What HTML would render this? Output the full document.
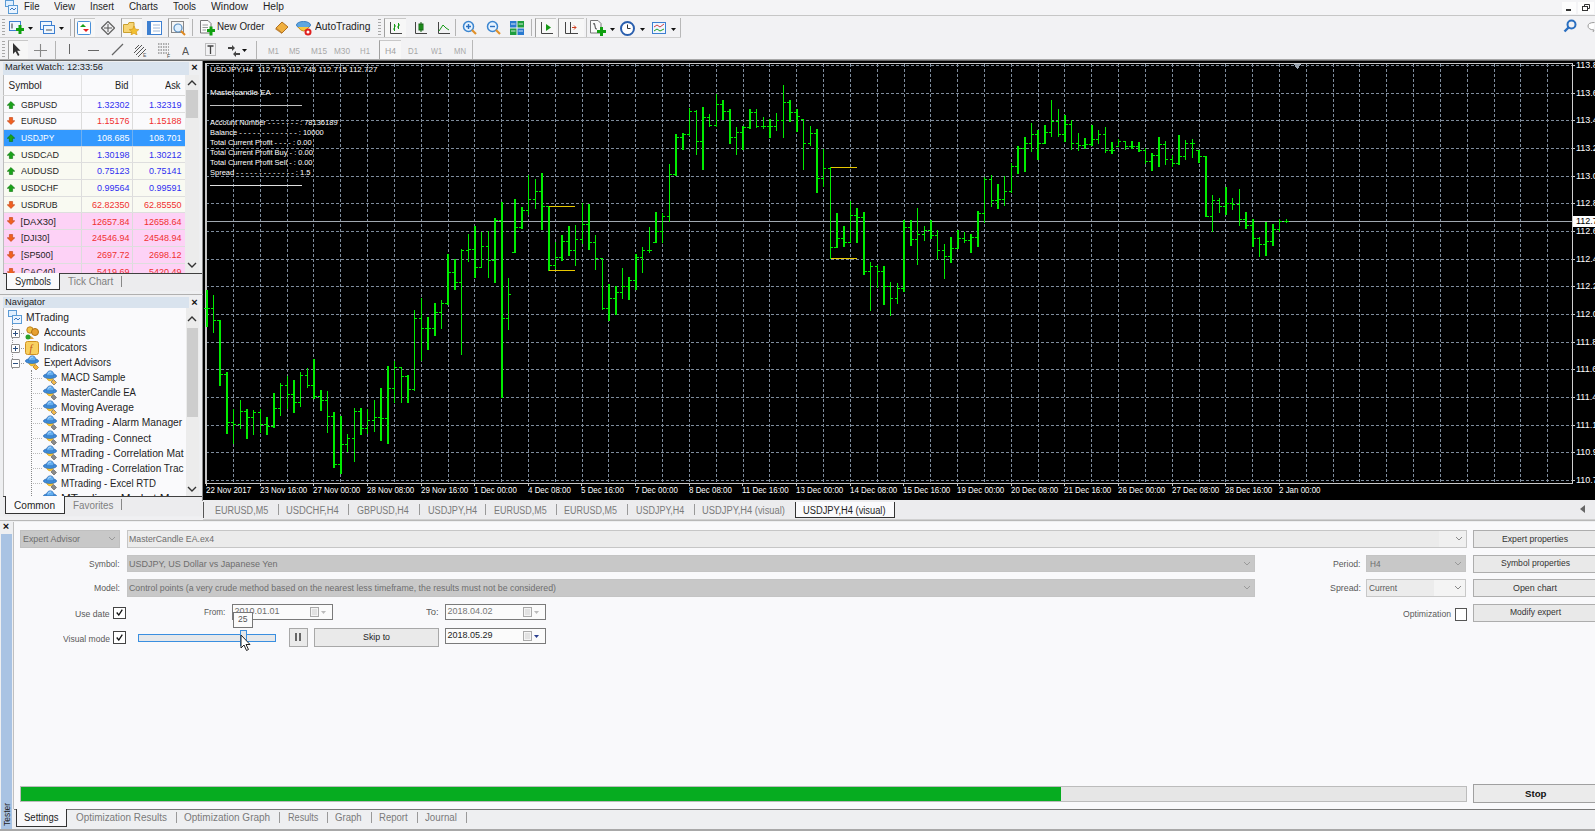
<!DOCTYPE html><html><head><meta charset="utf-8"><style>
*{margin:0;padding:0;box-sizing:border-box}
html,body{width:1595px;height:831px;overflow:hidden;background:#f0f0f2;font-family:"Liberation Sans",sans-serif}
.t{position:absolute;white-space:pre;line-height:1}
.b{position:absolute}
svg{position:absolute}
</style></head><body><div class="b" style="left:0px;top:0px;width:1595px;height:15px;background:#f4f4f6"></div><svg style="left:4px;top:0px;" width="14" height="14" viewBox="0 0 14 14"><rect x="1.5" y="0.5" width="8" height="6" fill="#dfefff" stroke="#5b9bd5"/><rect x="4.5" y="5.5" width="9" height="8" fill="#eaf4ff" stroke="#5b9bd5"/><path d="M6 10l2-2 2 2 2-2" stroke="#3a78c0" fill="none"/></svg><div class="t" style="left:23.50px;top:1.84px;font-size:10px;color:#1e1e1e;transform:scaleX(0.9619);transform-origin:0 0;">File</div><div class="t" style="left:54.00px;top:1.84px;font-size:10px;color:#1e1e1e;transform:scaleX(0.9770);transform-origin:0 0;">View</div><div class="t" style="left:90.00px;top:1.84px;font-size:10px;color:#1e1e1e;transform:scaleX(0.9596);transform-origin:0 0;">Insert</div><div class="t" style="left:129.00px;top:1.84px;font-size:10px;color:#1e1e1e;transform:scaleX(0.9846);transform-origin:0 0;">Charts</div><div class="t" style="left:173.00px;top:1.84px;font-size:10px;color:#1e1e1e;transform:scaleX(0.9852);transform-origin:0 0;">Tools</div><div class="t" style="left:211.00px;top:1.84px;font-size:10px;color:#1e1e1e;transform:scaleX(1.0403);transform-origin:0 0;">Window</div><div class="t" style="left:263.00px;top:1.84px;font-size:10px;color:#1e1e1e;transform:scaleX(1.0210);transform-origin:0 0;">Help</div><div class="b" style="left:1562px;top:2px;width:14px;height:12px;background:#fdfdfd"></div><div class="b" style="left:1566px;top:9px;width:5px;height:1.5px;background:#333"></div><div class="b" style="left:1578px;top:2px;width:16px;height:12px;background:#fdfdfd"></div><svg style="left:1580px;top:3px;" width="12" height="10" viewBox="0 0 12 10"><rect x="2.5" y="3.5" width="5" height="4" fill="none" stroke="#333"/><path d="M4.5 3.5V1.5H9.5V5.5H7.5" fill="none" stroke="#333"/></svg><div class="b" style="left:0px;top:15px;width:1595px;height:1px;background:#c6c6c6"></div><div class="b" style="left:0px;top:16px;width:1595px;height:22px;background:#f2f2f4"></div><div class="b" style="left:0px;top:37px;width:681px;height:1px;background:#cfcfcf"></div><div class="b" style="left:2px;top:19px;width:3px;height:1px;background:#a8a8a8"></div><div class="b" style="left:2px;top:22px;width:3px;height:1px;background:#a8a8a8"></div><div class="b" style="left:2px;top:25px;width:3px;height:1px;background:#a8a8a8"></div><div class="b" style="left:2px;top:28px;width:3px;height:1px;background:#a8a8a8"></div><div class="b" style="left:2px;top:31px;width:3px;height:1px;background:#a8a8a8"></div><div class="b" style="left:2px;top:34px;width:3px;height:1px;background:#a8a8a8"></div><svg style="left:9px;top:21px;" width="16" height="14" viewBox="0 0 16 14"><rect x="0.5" y="0.5" width="11" height="9" fill="#eef6ff" stroke="#3d7fd0"/><path d="M3 2.5V7.5" stroke="#333"/><rect x="7" y="7" width="8" height="3" fill="#10a010"/><rect x="9.5" y="4" width="3" height="9" fill="#10a010"/></svg><svg style="left:28px;top:27px;" width="5" height="3" viewBox="0 0 5 3"><path d="M0 0H5L2.5 3Z" fill="#111"/></svg><svg style="left:40px;top:21px;" width="16" height="14" viewBox="0 0 16 14"><rect x="0.5" y="0.5" width="11" height="8" fill="#eef6ff" stroke="#3d7fd0"/><rect x="3.5" y="4.5" width="11" height="8" fill="#eef6ff" stroke="#3d7fd0"/><path d="M6 9H12" stroke="#555"/></svg><svg style="left:59px;top:27px;" width="5" height="3" viewBox="0 0 5 3"><path d="M0 0H5L2.5 3Z" fill="#111"/></svg><div class="b" style="left:70px;top:19px;width:1px;height:17px;background:#b4b4b4"></div><div class="b" style="left:74px;top:18px;width:21px;height:19px;border-left:1px solid #a0a0a0;border-top:1px solid #c8c8c8;background:#f7f7f7"></div><svg style="left:77px;top:21px;" width="14" height="14" viewBox="0 0 14 14"><rect x="0.5" y="0.5" width="13" height="13" rx="1" fill="#fff" stroke="#4a90d9"/><path d="M3 6l3-3 3 3z" fill="#19a019"/><path d="M6 8l3 3 3-3z" fill="#e52020"/></svg><svg style="left:101px;top:21px;" width="14" height="14" viewBox="0 0 14 14"><path d="M7 0.5L13.5 7L7 13.5L0.5 7Z" fill="none" stroke="#666" stroke-width="1.3"/><path d="M7 3V11M3 7H11" stroke="#555"/></svg><div class="b" style="left:121px;top:18px;width:21px;height:19px;border-left:1px solid #a0a0a0;border-top:1px solid #c8c8c8;background:#f7f7f7"></div><svg style="left:123px;top:21px;" width="17" height="14" viewBox="0 0 17 14"><path d="M0.5 3.5H5l1-2h5v10H0.5z" fill="#f7d575" stroke="#c9a030"/><path d="M11 5l1.5 3.2 3.4.4-2.6 2.2.8 3.3-3.1-1.8-3 1.8.8-3.3-2.6-2.2 3.4-.4z" fill="#f2c030" stroke="#d09010" stroke-width=".6"/></svg><svg style="left:147px;top:21px;" width="15" height="14" viewBox="0 0 15 14"><rect x="0.5" y="0.5" width="14" height="13" fill="#fff" stroke="#3d7fd0"/><rect x="1" y="1" width="3" height="12" fill="#3d7fd0"/><path d="M6 4H13M6 7H13M6 10H13" stroke="#a0b8d8"/></svg><div class="b" style="left:168px;top:18px;width:21px;height:19px;border-left:1px solid #a0a0a0;border-top:1px solid #c8c8c8;background:#f7f7f7"></div><svg style="left:171px;top:21px;" width="16" height="15" viewBox="0 0 16 15"><rect x="0.5" y="0.5" width="12" height="11" fill="#f4f4f4" stroke="#888"/><circle cx="7" cy="7" r="4" fill="#dff0ff" stroke="#5a8fc0" stroke-width="1.2"/><path d="M10 10l4 4" stroke="#e08a20" stroke-width="2"/></svg><div class="b" style="left:192px;top:19px;width:1px;height:17px;background:#b4b4b4"></div><svg style="left:200px;top:20px;" width="15" height="16" viewBox="0 0 15 16"><path d="M0.5 0.5H8l3 3V13H0.5z" fill="#fbfbfb" stroke="#777"/><path d="M2.5 5H8M2.5 7.5H8M2.5 10H6" stroke="#999"/><rect x="7" y="9" width="8" height="3" fill="#10a010"/><rect x="9.5" y="6.5" width="3" height="9" fill="#10a010"/></svg><div class="t" style="left:216.50px;top:21.73px;font-size:10px;color:#1e1e1e;transform:scaleX(0.9825);transform-origin:0 0;">New Order</div><svg style="left:274px;top:21px;" width="15" height="13" viewBox="0 0 15 13"><path d="M2 7L8 1L14 6L8 12Z" fill="#f0b040" stroke="#b07020"/><path d="M2 7L8 12L8 13L1 8Z" fill="#c08030"/></svg><svg style="left:296px;top:20px;" width="16" height="16" viewBox="0 0 16 16"><ellipse cx="7.5" cy="5" rx="7" ry="3.5" fill="#5ea6e0" stroke="#3b7dc0"/><path d="M2 7Q7.5 15 13 7" fill="#f5c842" stroke="#c89020"/><circle cx="12" cy="12" r="3.5" fill="#e02020"/><circle cx="12" cy="12" r="1.5" fill="#fff"/></svg><div class="t" style="left:314.50px;top:21.73px;font-size:10px;color:#1e1e1e;transform:scaleX(1.0257);transform-origin:0 0;">AutoTrading</div><div class="b" style="left:378px;top:19px;width:3px;height:1px;background:#a8a8a8"></div><div class="b" style="left:378px;top:22px;width:3px;height:1px;background:#a8a8a8"></div><div class="b" style="left:378px;top:25px;width:3px;height:1px;background:#a8a8a8"></div><div class="b" style="left:378px;top:28px;width:3px;height:1px;background:#a8a8a8"></div><div class="b" style="left:378px;top:31px;width:3px;height:1px;background:#a8a8a8"></div><div class="b" style="left:378px;top:34px;width:3px;height:1px;background:#a8a8a8"></div><div class="b" style="left:384px;top:18px;width:22px;height:19px;border-left:1px solid #a0a0a0;border-top:1px solid #c8c8c8;background:#f7f7f7"></div><svg style="left:389px;top:21px;" width="14" height="14" viewBox="0 0 14 14"><path d="M1.5 1V12.5H13" fill="none" stroke="#444"/><path d="M5.5 3V10M4 8H5.5M5.5 5H7M9.5 2V8M8 6H9.5M9.5 4H11" stroke="#159a15"/></svg><svg style="left:414px;top:21px;" width="14" height="14" viewBox="0 0 14 14"><path d="M1.5 1V12.5H13" fill="none" stroke="#444"/><rect x="5" y="3" width="4" height="6" fill="#20b020" stroke="#156015"/><path d="M7 1V11" stroke="#156015"/></svg><svg style="left:437px;top:21px;" width="14" height="14" viewBox="0 0 14 14"><path d="M1.5 1V12.5H13" fill="none" stroke="#444"/><path d="M2 10L6 4L9 7L12 9" fill="none" stroke="#159a15"/></svg><div class="b" style="left:455px;top:19px;width:1px;height:17px;background:#b4b4b4"></div><svg style="left:462px;top:20px;" width="16" height="16" viewBox="0 0 16 16"><circle cx="6.5" cy="6.5" r="5" fill="#e6f3ff" stroke="#3c86d0" stroke-width="1.5"/><path d="M4 6.5H9M6.5 4V9" stroke="#2a70c0" stroke-width="1.4"/><path d="M10 10l4 4" stroke="#e0902a" stroke-width="2.2"/></svg><svg style="left:486px;top:20px;" width="16" height="16" viewBox="0 0 16 16"><circle cx="6.5" cy="6.5" r="5" fill="#e6f3ff" stroke="#3c86d0" stroke-width="1.5"/><path d="M4 6.5H9" stroke="#2a70c0" stroke-width="1.4"/><path d="M10 10l4 4" stroke="#e0902a" stroke-width="2.2"/></svg><svg style="left:510px;top:21px;" width="14" height="14" viewBox="0 0 14 14"><rect x="0" y="0" width="6.5" height="6.5" fill="#2a7ad0"/><rect x="7.5" y="0" width="6.5" height="6.5" fill="#1e9e3e"/><rect x="0" y="7.5" width="6.5" height="6.5" fill="#1e9e3e"/><rect x="7.5" y="7.5" width="6.5" height="6.5" fill="#2a7ad0"/><path d="M1 3H5.5M8.5 3H13M1 10H5.5M8.5 10H13" stroke="#fff" stroke-width=".8"/></svg><div class="b" style="left:531px;top:19px;width:1px;height:17px;background:#b4b4b4"></div><div class="b" style="left:535px;top:18px;width:21px;height:19px;border-left:1px solid #a0a0a0;border-top:1px solid #c8c8c8;background:#f7f7f7"></div><svg style="left:540px;top:21px;" width="14" height="14" viewBox="0 0 14 14"><path d="M1.5 1V12.5H13" fill="none" stroke="#444"/><path d="M6 3V10L11 6.5Z" fill="#159a15"/></svg><div class="b" style="left:558px;top:18px;width:26px;height:19px;border-left:1px solid #a0a0a0;border-top:1px solid #c8c8c8;background:#f7f7f7"></div><svg style="left:564px;top:21px;" width="16" height="14" viewBox="0 0 16 14"><path d="M1.5 1V12.5H14" fill="none" stroke="#444"/><path d="M6.5 1V12" stroke="#444"/><path d="M8 6.5H12M10 4.5L12 6.5L10 8.5" stroke="#d04020" fill="none"/></svg><div class="b" style="left:586px;top:18px;width:1px;height:19px;background:#c0c0c0"></div><svg style="left:590px;top:20px;" width="17" height="17" viewBox="0 0 17 17"><path d="M0.5 0.5H8l3 3V13H0.5z" fill="#fbfbfb" stroke="#777"/><path d="M3 4Q5 2 5 6T7 9" stroke="#444" fill="none"/><rect x="7" y="10" width="9" height="3" fill="#10a010"/><rect x="10" y="7" width="3" height="9" fill="#10a010"/></svg><svg style="left:610px;top:28px;" width="5" height="3" viewBox="0 0 5 3"><path d="M0 0H5L2.5 3Z" fill="#111"/></svg><svg style="left:620px;top:21px;" width="15" height="15" viewBox="0 0 15 15"><circle cx="7.5" cy="7.5" r="6.5" fill="#fff" stroke="#2a5fae" stroke-width="2"/><path d="M7.5 3.5V7.5H10.5" stroke="#333" fill="none"/></svg><svg style="left:640px;top:28px;" width="5" height="3" viewBox="0 0 5 3"><path d="M0 0H5L2.5 3Z" fill="#111"/></svg><svg style="left:652px;top:22px;" width="14" height="12" viewBox="0 0 14 12"><rect x="0.5" y="0.5" width="13" height="11" fill="#f0f6ff" stroke="#3d7fd0"/><path d="M2 5L5 3L8 5L12 2" stroke="#d04040" fill="none"/><path d="M2 9L5 7L8 9L12 7" stroke="#20a020" fill="none"/></svg><svg style="left:671px;top:28px;" width="5" height="3" viewBox="0 0 5 3"><path d="M0 0H5L2.5 3Z" fill="#111"/></svg><div class="b" style="left:680px;top:18px;width:1px;height:19px;background:#b8b8b8"></div><div class="b" style="left:0px;top:38px;width:681px;height:1px;background:#d8d8d8"></div><svg style="left:1563px;top:19px;" width="14" height="14" viewBox="0 0 14 14"><circle cx="8.5" cy="5.5" r="4" fill="none" stroke="#2a6fc0" stroke-width="2"/><path d="M6 8L1.5 12.5" stroke="#2a6fc0" stroke-width="2.4"/></svg><svg style="left:1587px;top:21px;" width="8" height="12" viewBox="0 0 8 12"><path d="M7.5 1.5Q1 1.5 1 5T7 9L6 11" fill="#fff" stroke="#999"/></svg><div class="b" style="left:0px;top:38px;width:1595px;height:22px;background:#f2f2f4"></div><div class="b" style="left:2px;top:41px;width:3px;height:1px;background:#a8a8a8"></div><div class="b" style="left:2px;top:44px;width:3px;height:1px;background:#a8a8a8"></div><div class="b" style="left:2px;top:47px;width:3px;height:1px;background:#a8a8a8"></div><div class="b" style="left:2px;top:50px;width:3px;height:1px;background:#a8a8a8"></div><div class="b" style="left:2px;top:53px;width:3px;height:1px;background:#a8a8a8"></div><div class="b" style="left:2px;top:56px;width:3px;height:1px;background:#a8a8a8"></div><div class="b" style="left:8px;top:40px;width:20px;height:20px;border-left:1px solid #a0a0a0;border-top:1px solid #c8c8c8;background:#f7f7f7"></div><svg style="left:12px;top:43px;" width="10" height="14" viewBox="0 0 10 14"><path d="M1 0V11L3.5 8.5L6 13L7.5 12L5.2 7.8H8.5Z" fill="#333"/></svg><svg style="left:33px;top:43px;" width="15" height="15" viewBox="0 0 15 15"><path d="M7.5 1V14M1 7.5H14" stroke="#888" stroke-width="1.1"/></svg><div class="b" style="left:55px;top:41px;width:1px;height:18px;background:#b4b4b4"></div><div class="b" style="left:69px;top:44px;width:1.3px;height:10px;background:#666"></div><div class="b" style="left:88px;top:50px;width:11px;height:1.3px;background:#666"></div><svg style="left:111px;top:43px;" width="13" height="13" viewBox="0 0 13 13"><path d="M1 12L12 1" stroke="#666" stroke-width="1.3"/></svg><svg style="left:133px;top:42px;" width="15" height="16" viewBox="0 0 15 16"><path d="M1 11L9 3M3 13L11 5M5 15L13 7M2 7L6 3" stroke="#555" stroke-width="1"/><text x="10" y="15" font-size="5" fill="#555" font-family="Liberation Sans">E</text></svg><svg style="left:157px;top:42px;" width="15" height="16" viewBox="0 0 15 16"><path d="M1 2H12M1 5H12M1 8H12M1 11H12" stroke="#666" stroke-dasharray="1.5 1"/><text x="10" y="15.5" font-size="5" fill="#444" font-family="Liberation Sans">F</text></svg><div class="t" style="left:182.00px;top:46.53px;font-size:10px;color:#555;transform:scaleX(1.0494);transform-origin:0 0;">A</div><svg style="left:205px;top:43px;" width="11" height="13" viewBox="0 0 11 13"><rect x="0.5" y="0.5" width="10" height="12" fill="none" stroke="#888" stroke-dasharray="1 1"/><path d="M2.5 3H8.5M5.5 3V11" stroke="#444" stroke-width="1.3"/></svg><svg style="left:227px;top:43px;" width="14" height="14" viewBox="0 0 14 14"><path d="M1 4L5 4L5 2L8 5L5 8L5 6L1 6Z" fill="#444"/><path d="M13 10L9 10L9 8L6 11L9 14L9 12L13 12Z" fill="#444"/></svg><svg style="left:242px;top:49px;" width="5" height="3" viewBox="0 0 5 3"><path d="M0 0H5L2.5 3Z" fill="#111"/></svg><div class="b" style="left:256px;top:41px;width:1px;height:18px;background:#b4b4b4"></div><div class="t" style="left:268.00px;top:46.80px;font-size:8.5px;color:#a8a8a8;transform:scaleX(0.9316);transform-origin:0 0;">M1</div><div class="t" style="left:289.00px;top:46.80px;font-size:8.5px;color:#a8a8a8;transform:scaleX(0.9316);transform-origin:0 0;">M5</div><div class="t" style="left:311.00px;top:46.80px;font-size:8.5px;color:#a8a8a8;transform:scaleX(0.9676);transform-origin:0 0;">M15</div><div class="t" style="left:334.00px;top:46.80px;font-size:8.5px;color:#a8a8a8;transform:scaleX(0.9676);transform-origin:0 0;">M30</div><div class="t" style="left:360.00px;top:46.80px;font-size:8.5px;color:#a8a8a8;transform:scaleX(0.9203);transform-origin:0 0;">H1</div><div class="t" style="left:385.00px;top:46.80px;font-size:8.5px;color:#a8a8a8;transform:scaleX(1.0124);transform-origin:0 0;">H4</div><div class="t" style="left:408.00px;top:46.80px;font-size:8.5px;color:#a8a8a8;transform:scaleX(0.9203);transform-origin:0 0;">D1</div><div class="t" style="left:431.00px;top:46.80px;font-size:8.5px;color:#a8a8a8;transform:scaleX(0.8627);transform-origin:0 0;">W1</div><div class="t" style="left:454.00px;top:46.80px;font-size:8.5px;color:#a8a8a8;transform:scaleX(0.9078);transform-origin:0 0;">MN</div><div class="b" style="left:379px;top:40px;width:22px;height:20px;border-left:1px solid #a0a0a0;border-top:1px solid #c8c8c8;background:#f7f7f7"></div><div class="t" style="left:385.00px;top:46.80px;font-size:8.5px;color:#a0a0a0;transform:scaleX(1.0124);transform-origin:0 0;">H4</div><div class="b" style="left:472px;top:40px;width:1px;height:20px;background:#b8b8b8"></div><div class="b" style="left:0px;top:59px;width:1595px;height:1px;background:#a8a8a8"></div><div class="b" style="left:0px;top:60px;width:1595px;height:1px;background:#6a6a6a"></div><div class="b" style="left:0px;top:61px;width:203px;height:234px;background:#eeeff1"></div><div class="b" style="left:202px;top:61px;width:1px;height:440px;background:#8a8a8a"></div><div class="b" style="left:3px;top:62px;width:186px;height:13px;background:#d9e3ee"></div><div class="t" style="left:5.00px;top:63.38px;font-size:9px;color:#1e1e1e;transform:scaleX(1.0293);transform-origin:0 0;">Market Watch: 12:33:56</div><div class="t" style="left:191.29px;top:62.19px;font-size:11px;color:#111;font-weight:bold;">×</div><div class="b" style="left:3px;top:75px;width:182px;height:198px;background:#fafafc;border-left:1px solid #bdbdbd"></div><div class="b" style="left:3px;top:94.5px;width:182px;height:1.5px;background:#d8d8d8"></div><div class="b" style="left:81px;top:75px;width:1px;height:198px;background:#e2e2e2"></div><div class="b" style="left:132px;top:75px;width:1px;height:198px;background:#e2e2e2"></div><div class="t" style="left:8.50px;top:80.53px;font-size:10px;color:#1e1e1e;">Symbol</div><div class="t" style="left:115.00px;top:80.53px;font-size:10px;color:#1e1e1e;transform:scaleX(0.9340);transform-origin:0 0;">Bid</div><div class="t" style="left:164.50px;top:80.53px;font-size:10px;color:#1e1e1e;transform:scaleX(0.9298);transform-origin:0 0;">Ask</div><div class="b" style="left:4px;top:96.0px;width:181px;height:16.7px;background:#fafafc"></div><div class="b" style="left:81px;top:96.0px;width:1px;height:16.7px;background:#dcdcdc"></div><div class="b" style="left:132px;top:96.0px;width:1px;height:16.7px;background:#dcdcdc"></div><svg style="left:7px;top:100.5px;" width="8" height="8" viewBox="0 0 8 8"><path d="M4 0.5L7.8 4.3H5.6V7.5H2.4V4.3H0.2Z" fill="#1aa31a" stroke="#0c700c" stroke-width=".6"/></svg><div class="t" style="left:20.60px;top:99.66px;font-size:9.5px;color:#1e1e1e;transform:scaleX(0.9048);transform-origin:0 0;">GBPUSD</div><div class="t" style="left:97.47px;top:99.66px;font-size:9.5px;color:#3030f0;transform:scaleX(0.9474);transform-origin:0 0;">1.32302</div><div class="t" style="left:148.67px;top:99.66px;font-size:9.5px;color:#3030f0;transform:scaleX(0.9474);transform-origin:0 0;">1.32319</div><div class="b" style="left:4px;top:112.7px;width:181px;height:16.7px;background:#fafafc"></div><div class="b" style="left:81px;top:112.7px;width:1px;height:16.7px;background:#dcdcdc"></div><div class="b" style="left:132px;top:112.7px;width:1px;height:16.7px;background:#dcdcdc"></div><div class="b" style="left:4px;top:112.2px;width:181px;height:1px;background:#dedede"></div><svg style="left:7px;top:117.2px;" width="8" height="8" viewBox="0 0 8 8"><path d="M4 7.5L7.8 3.7H5.6V0.5H2.4V3.7H0.2Z" fill="#f06020" stroke="#c04010" stroke-width=".6"/></svg><div class="t" style="left:20.60px;top:116.36px;font-size:9.5px;color:#1e1e1e;transform:scaleX(0.8899);transform-origin:0 0;">EURUSD</div><div class="t" style="left:97.47px;top:116.36px;font-size:9.5px;color:#f03030;transform:scaleX(0.9474);transform-origin:0 0;">1.15176</div><div class="t" style="left:148.67px;top:116.36px;font-size:9.5px;color:#f03030;transform:scaleX(0.9474);transform-origin:0 0;">1.15188</div><div class="b" style="left:4px;top:129.4px;width:181px;height:16.7px;background:#3399ff"></div><div class="b" style="left:81px;top:129.4px;width:1px;height:16.7px;background:#70b0f0"></div><div class="b" style="left:132px;top:129.4px;width:1px;height:16.7px;background:#70b0f0"></div><div class="b" style="left:4px;top:128.9px;width:181px;height:1px;background:#dedede"></div><svg style="left:7px;top:133.9px;" width="8" height="8" viewBox="0 0 8 8"><path d="M4 0.5L7.8 4.3H5.6V7.5H2.4V4.3H0.2Z" fill="#1aa31a" stroke="#0c700c" stroke-width=".6"/></svg><div class="t" style="left:20.60px;top:133.06px;font-size:9.5px;color:#fff;transform:scaleX(0.8911);transform-origin:0 0;">USDJPY</div><div class="t" style="left:97.47px;top:133.06px;font-size:9.5px;color:#fff;transform:scaleX(0.9474);transform-origin:0 0;">108.685</div><div class="t" style="left:148.67px;top:133.06px;font-size:9.5px;color:#fff;transform:scaleX(0.9474);transform-origin:0 0;">108.701</div><div class="b" style="left:4px;top:146.1px;width:181px;height:16.7px;background:#f9faf2"></div><div class="b" style="left:81px;top:146.1px;width:1px;height:16.7px;background:#dcdcdc"></div><div class="b" style="left:132px;top:146.1px;width:1px;height:16.7px;background:#dcdcdc"></div><div class="b" style="left:4px;top:145.6px;width:181px;height:1px;background:#dedede"></div><svg style="left:7px;top:150.6px;" width="8" height="8" viewBox="0 0 8 8"><path d="M4 0.5L7.8 4.3H5.6V7.5H2.4V4.3H0.2Z" fill="#1aa31a" stroke="#0c700c" stroke-width=".6"/></svg><div class="t" style="left:20.60px;top:149.76px;font-size:9.5px;color:#1e1e1e;transform:scaleX(0.9472);transform-origin:0 0;">USDCAD</div><div class="t" style="left:97.47px;top:149.76px;font-size:9.5px;color:#3030f0;transform:scaleX(0.9474);transform-origin:0 0;">1.30198</div><div class="t" style="left:148.67px;top:149.76px;font-size:9.5px;color:#3030f0;transform:scaleX(0.9474);transform-origin:0 0;">1.30212</div><div class="b" style="left:4px;top:162.8px;width:181px;height:16.7px;background:#f9faf2"></div><div class="b" style="left:81px;top:162.8px;width:1px;height:16.7px;background:#dcdcdc"></div><div class="b" style="left:132px;top:162.8px;width:1px;height:16.7px;background:#dcdcdc"></div><div class="b" style="left:4px;top:162.3px;width:181px;height:1px;background:#dedede"></div><svg style="left:7px;top:167.3px;" width="8" height="8" viewBox="0 0 8 8"><path d="M4 0.5L7.8 4.3H5.6V7.5H2.4V4.3H0.2Z" fill="#1aa31a" stroke="#0c700c" stroke-width=".6"/></svg><div class="t" style="left:20.60px;top:166.46px;font-size:9.5px;color:#1e1e1e;transform:scaleX(0.9472);transform-origin:0 0;">AUDUSD</div><div class="t" style="left:97.47px;top:166.46px;font-size:9.5px;color:#3030f0;transform:scaleX(0.9474);transform-origin:0 0;">0.75123</div><div class="t" style="left:148.67px;top:166.46px;font-size:9.5px;color:#3030f0;transform:scaleX(0.9474);transform-origin:0 0;">0.75141</div><div class="b" style="left:4px;top:179.5px;width:181px;height:16.7px;background:#f9faf2"></div><div class="b" style="left:81px;top:179.5px;width:1px;height:16.7px;background:#dcdcdc"></div><div class="b" style="left:132px;top:179.5px;width:1px;height:16.7px;background:#dcdcdc"></div><div class="b" style="left:4px;top:179.0px;width:181px;height:1px;background:#dedede"></div><svg style="left:7px;top:184.0px;" width="8" height="8" viewBox="0 0 8 8"><path d="M4 0.5L7.8 4.3H5.6V7.5H2.4V4.3H0.2Z" fill="#1aa31a" stroke="#0c700c" stroke-width=".6"/></svg><div class="t" style="left:20.60px;top:183.16px;font-size:9.5px;color:#1e1e1e;transform:scaleX(0.9398);transform-origin:0 0;">USDCHF</div><div class="t" style="left:97.47px;top:183.16px;font-size:9.5px;color:#3030f0;transform:scaleX(0.9474);transform-origin:0 0;">0.99564</div><div class="t" style="left:148.67px;top:183.16px;font-size:9.5px;color:#3030f0;transform:scaleX(0.9474);transform-origin:0 0;">0.99591</div><div class="b" style="left:4px;top:196.2px;width:181px;height:16.7px;background:#f9faf2"></div><div class="b" style="left:81px;top:196.2px;width:1px;height:16.7px;background:#dcdcdc"></div><div class="b" style="left:132px;top:196.2px;width:1px;height:16.7px;background:#dcdcdc"></div><div class="b" style="left:4px;top:195.7px;width:181px;height:1px;background:#dedede"></div><svg style="left:7px;top:200.7px;" width="8" height="8" viewBox="0 0 8 8"><path d="M4 7.5L7.8 3.7H5.6V0.5H2.4V3.7H0.2Z" fill="#f06020" stroke="#c04010" stroke-width=".6"/></svg><div class="t" style="left:20.60px;top:199.86px;font-size:9.5px;color:#1e1e1e;transform:scaleX(0.9123);transform-origin:0 0;">USDRUB</div><div class="t" style="left:92.46px;top:199.86px;font-size:9.5px;color:#f03030;transform:scaleX(0.9474);transform-origin:0 0;">62.82350</div><div class="t" style="left:143.66px;top:199.86px;font-size:9.5px;color:#f03030;transform:scaleX(0.9474);transform-origin:0 0;">62.85550</div><div class="b" style="left:4px;top:212.89999999999998px;width:181px;height:16.7px;background:#fdd2f6"></div><div class="b" style="left:81px;top:212.89999999999998px;width:1px;height:16.7px;background:#dcdcdc"></div><div class="b" style="left:132px;top:212.89999999999998px;width:1px;height:16.7px;background:#dcdcdc"></div><div class="b" style="left:4px;top:212.39999999999998px;width:181px;height:1px;background:#dedede"></div><svg style="left:7px;top:217.39999999999998px;" width="8" height="8" viewBox="0 0 8 8"><path d="M4 7.5L7.8 3.7H5.6V0.5H2.4V3.7H0.2Z" fill="#f06020" stroke="#c04010" stroke-width=".6"/></svg><div class="t" style="left:20.60px;top:216.56px;font-size:9.5px;color:#1e1e1e;">[DAX30]</div><div class="t" style="left:92.46px;top:216.56px;font-size:9.5px;color:#f03030;transform:scaleX(0.9474);transform-origin:0 0;">12657.84</div><div class="t" style="left:143.66px;top:216.56px;font-size:9.5px;color:#f03030;transform:scaleX(0.9474);transform-origin:0 0;">12658.64</div><div class="b" style="left:4px;top:229.6px;width:181px;height:16.7px;background:#fdd2f6"></div><div class="b" style="left:81px;top:229.6px;width:1px;height:16.7px;background:#dcdcdc"></div><div class="b" style="left:132px;top:229.6px;width:1px;height:16.7px;background:#dcdcdc"></div><div class="b" style="left:4px;top:229.1px;width:181px;height:1px;background:#dedede"></div><svg style="left:7px;top:234.1px;" width="8" height="8" viewBox="0 0 8 8"><path d="M4 7.5L7.8 3.7H5.6V0.5H2.4V3.7H0.2Z" fill="#f06020" stroke="#c04010" stroke-width=".6"/></svg><div class="t" style="left:20.60px;top:233.26px;font-size:9.5px;color:#1e1e1e;transform:scaleX(0.9437);transform-origin:0 0;">[DJI30]</div><div class="t" style="left:92.46px;top:233.26px;font-size:9.5px;color:#f03030;transform:scaleX(0.9474);transform-origin:0 0;">24546.94</div><div class="t" style="left:143.66px;top:233.26px;font-size:9.5px;color:#f03030;transform:scaleX(0.9474);transform-origin:0 0;">24548.94</div><div class="b" style="left:4px;top:246.29999999999998px;width:181px;height:16.7px;background:#fdd2f6"></div><div class="b" style="left:81px;top:246.29999999999998px;width:1px;height:16.7px;background:#dcdcdc"></div><div class="b" style="left:132px;top:246.29999999999998px;width:1px;height:16.7px;background:#dcdcdc"></div><div class="b" style="left:4px;top:245.79999999999998px;width:181px;height:1px;background:#dedede"></div><svg style="left:7px;top:250.79999999999998px;" width="8" height="8" viewBox="0 0 8 8"><path d="M4 7.5L7.8 3.7H5.6V0.5H2.4V3.7H0.2Z" fill="#f06020" stroke="#c04010" stroke-width=".6"/></svg><div class="t" style="left:20.60px;top:249.96px;font-size:9.5px;color:#1e1e1e;transform:scaleX(0.9467);transform-origin:0 0;">[SP500]</div><div class="t" style="left:97.47px;top:249.96px;font-size:9.5px;color:#f03030;transform:scaleX(0.9474);transform-origin:0 0;">2697.72</div><div class="t" style="left:148.67px;top:249.96px;font-size:9.5px;color:#f03030;transform:scaleX(0.9474);transform-origin:0 0;">2698.12</div><div class="b" style="left:4px;top:263.0px;width:181px;height:10.0px;background:#fdd2f6"></div><div class="b" style="left:81px;top:263.0px;width:1px;height:10.0px;background:#dcdcdc"></div><div class="b" style="left:132px;top:263.0px;width:1px;height:10.0px;background:#dcdcdc"></div><div class="b" style="left:4px;top:262.5px;width:181px;height:1px;background:#dedede"></div><svg style="left:7px;top:267.5px;" width="8" height="8" viewBox="0 0 8 8"><path d="M4 7.5L7.8 3.7H5.6V0.5H2.4V3.7H0.2Z" fill="#f06020" stroke="#c04010" stroke-width=".6"/></svg><div class="t" style="left:20.60px;top:266.66px;font-size:9.5px;color:#1e1e1e;transform:scaleX(0.9553);transform-origin:0 0;">[CAC40]</div><div class="t" style="left:97.47px;top:266.66px;font-size:9.5px;color:#f03030;transform:scaleX(0.9474);transform-origin:0 0;">5419.69</div><div class="t" style="left:148.67px;top:266.66px;font-size:9.5px;color:#f03030;transform:scaleX(0.9474);transform-origin:0 0;">5420.49</div><div class="b" style="left:185px;top:75px;width:14px;height:198px;background:#ececec"></div><svg style="left:187px;top:79px;" width="10" height="7" viewBox="0 0 10 7"><path d="M1 6L5 2L9 6" stroke="#333" stroke-width="1.4" fill="none"/></svg><div class="b" style="left:186px;top:90px;width:12px;height:28px;background:#cdcdcd"></div><svg style="left:187px;top:262px;" width="10" height="7" viewBox="0 0 10 7"><path d="M1 1L5 5L9 1" stroke="#333" stroke-width="1.4" fill="none"/></svg><div class="b" style="left:3px;top:273px;width:199px;height:18px;background:#ececee"></div><div class="b" style="left:3px;top:273px;width:199px;height:1px;background:#404040"></div><div class="b" style="left:5.5px;top:273px;width:54px;height:16.5px;background:#fafafc;border:1px solid #333;border-top:none"></div><div class="t" style="left:14.50px;top:277.04px;font-size:10px;color:#1e1e1e;transform:scaleX(0.9388);transform-origin:0 0;">Symbols</div><div class="t" style="left:68.00px;top:277.04px;font-size:10px;color:#808080;">Tick Chart</div><div class="b" style="left:121px;top:276px;width:1px;height:11px;background:#888"></div><div class="b" style="left:0px;top:293.5px;width:203px;height:1px;background:#b0b0b0"></div><div class="b" style="left:0px;top:295px;width:202px;height:222px;background:#eeeff1"></div><div class="b" style="left:3px;top:297px;width:186px;height:11px;background:#d9e3ee"></div><div class="t" style="left:5.00px;top:297.88px;font-size:9px;color:#1e1e1e;transform:scaleX(1.0385);transform-origin:0 0;">Navigator</div><div class="t" style="left:191.29px;top:296.69px;font-size:11px;color:#111;font-weight:bold;">×</div><div class="b" style="left:3px;top:308px;width:183px;height:188px;background:#fafafc;border-left:1px solid #bdbdbd"></div><div class="b" style="left:11.5px;top:324px;width:1px;height:45px;border-left:1px dotted #999"></div><div class="b" style="left:15px;top:332.5px;width:9px;height:1px;border-top:1px dotted #999"></div><div class="b" style="left:15px;top:347.5px;width:9px;height:1px;border-top:1px dotted #999"></div><div class="b" style="left:15px;top:362.5px;width:9px;height:1px;border-top:1px dotted #999"></div><div class="b" style="left:31px;top:370px;width:1px;height:126px;border-left:1px dotted #888"></div><div class="b" style="left:33px;top:378.0px;width:9px;height:1px;border-top:1px dotted #bbb"></div><div class="b" style="left:33px;top:393.05px;width:9px;height:1px;border-top:1px dotted #bbb"></div><div class="b" style="left:33px;top:408.1px;width:9px;height:1px;border-top:1px dotted #bbb"></div><div class="b" style="left:33px;top:423.15px;width:9px;height:1px;border-top:1px dotted #bbb"></div><div class="b" style="left:33px;top:438.2px;width:9px;height:1px;border-top:1px dotted #bbb"></div><div class="b" style="left:33px;top:453.25px;width:9px;height:1px;border-top:1px dotted #bbb"></div><div class="b" style="left:33px;top:468.3px;width:9px;height:1px;border-top:1px dotted #bbb"></div><div class="b" style="left:33px;top:483.35px;width:9px;height:1px;border-top:1px dotted #bbb"></div><div class="b" style="left:11px;top:328.5px;width:9px;height:9px;background:#fff;border:1px solid #8c8c8c;border-radius:1px"></div><div class="b" style="left:13px;top:332.5px;width:5px;height:1px;background:#2b4f80"></div><div class="b" style="left:15px;top:330.5px;width:1px;height:5px;background:#2b4f80"></div><div class="b" style="left:11px;top:343.5px;width:9px;height:9px;background:#fff;border:1px solid #8c8c8c;border-radius:1px"></div><div class="b" style="left:13px;top:347.5px;width:5px;height:1px;background:#2b4f80"></div><div class="b" style="left:15px;top:345.5px;width:1px;height:5px;background:#2b4f80"></div><div class="b" style="left:11px;top:358.5px;width:9px;height:9px;background:#fff;border:1px solid #8c8c8c;border-radius:1px"></div><div class="b" style="left:13px;top:362.5px;width:5px;height:1px;background:#2b4f80"></div><svg style="left:8px;top:310px;" width="14" height="14" viewBox="0 0 14 14"><rect x="0.5" y="0.5" width="8" height="6" fill="#dfefff" stroke="#5b9bd5"/><rect x="4.5" y="5.5" width="9" height="8" fill="#eaf4ff" stroke="#5b9bd5"/><path d="M6 10l2-2 2 2 2-2" stroke="#3a78c0" fill="none"/></svg><div class="t" style="left:26.30px;top:312.54px;font-size:10px;color:#1e1e1e;transform:scaleX(1.0271);transform-origin:0 0;">MTrading</div><svg style="left:25px;top:326px;" width="15" height="14" viewBox="0 0 15 14"><circle cx="5" cy="4" r="3.2" fill="#f0c040" stroke="#c08020"/><circle cx="10" cy="6" r="3.5" fill="#e8a030" stroke="#b07010"/><path d="M1 13Q5 7 9 13Z" fill="#e0a040"/><circle cx="3" cy="11" r="2.5" fill="#2aa02a"/></svg><div class="t" style="left:43.70px;top:328.04px;font-size:10px;color:#1e1e1e;transform:scaleX(1.0089);transform-origin:0 0;">Accounts</div><svg style="left:25px;top:341px;" width="14" height="14" viewBox="0 0 14 14"><rect x="0.5" y="0.5" width="13" height="13" rx="2" fill="#f8d060" stroke="#d09020"/><text x="4.5" y="11" font-size="10" font-style="italic" fill="#c05010" font-family="Liberation Serif">f</text></svg><div class="t" style="left:43.70px;top:343.04px;font-size:10px;color:#1e1e1e;">Indicators</div><svg style="left:25px;top:355px;" width="16" height="16" viewBox="0 0 16 16"><path d="M2.8 7Q7 15 11.2 7Z" fill="#f7c830" stroke="#d09010" stroke-width=".6"/><ellipse cx="7" cy="6" rx="6.6" ry="2.4" fill="#3f8fdc" stroke="#2a65b0" stroke-width=".7"/><path d="M3 5.8Q4 0.6 7.5 0.8Q10.8 1 11 5.8Z" fill="#62aef0" stroke="#2a65b0" stroke-width=".6"/><path d="M5 3.5Q6 2 8 2" stroke="#cfe6ff" stroke-width=".8" fill="none"/><path d="M10.5 9.5L13.5 12.5L11 15L8 12Z" fill="#f5b83a" stroke="#b07020" stroke-width=".7"/></svg><div class="t" style="left:43.70px;top:358.04px;font-size:10px;color:#1e1e1e;transform:scaleX(0.9644);transform-origin:0 0;">Expert Advisors</div><svg style="left:43px;top:370.0px;" width="16" height="16" viewBox="0 0 16 16"><path d="M2.8 7Q7 15 11.2 7Z" fill="#f7c830" stroke="#d09010" stroke-width=".6"/><ellipse cx="7" cy="6" rx="6.6" ry="2.4" fill="#3f8fdc" stroke="#2a65b0" stroke-width=".7"/><path d="M3 5.8Q4 0.6 7.5 0.8Q10.8 1 11 5.8Z" fill="#62aef0" stroke="#2a65b0" stroke-width=".6"/><path d="M5 3.5Q6 2 8 2" stroke="#cfe6ff" stroke-width=".8" fill="none"/><path d="M10.5 9.5L13.5 12.5L11 15L8 12Z" fill="#f2b84a" stroke="#666" stroke-width=".7"/></svg><div class="t" style="left:61.40px;top:373.34px;font-size:10px;color:#1e1e1e;transform:scaleX(0.9753);transform-origin:0 0;">MACD Sample</div><svg style="left:43px;top:385.05px;" width="16" height="16" viewBox="0 0 16 16"><path d="M2.8 7Q7 15 11.2 7Z" fill="#f7c830" stroke="#d09010" stroke-width=".6"/><ellipse cx="7" cy="6" rx="6.6" ry="2.4" fill="#3f8fdc" stroke="#2a65b0" stroke-width=".7"/><path d="M3 5.8Q4 0.6 7.5 0.8Q10.8 1 11 5.8Z" fill="#62aef0" stroke="#2a65b0" stroke-width=".6"/><path d="M5 3.5Q6 2 8 2" stroke="#cfe6ff" stroke-width=".8" fill="none"/><path d="M10.5 9.5L13.5 12.5L11 15L8 12Z" fill="#8a8a8a" stroke="#666" stroke-width=".7"/></svg><div class="t" style="left:61.40px;top:388.39px;font-size:10px;color:#1e1e1e;transform:scaleX(0.9570);transform-origin:0 0;">MasterCandle EA</div><svg style="left:43px;top:400.1px;" width="16" height="16" viewBox="0 0 16 16"><path d="M2.8 7Q7 15 11.2 7Z" fill="#f7c830" stroke="#d09010" stroke-width=".6"/><ellipse cx="7" cy="6" rx="6.6" ry="2.4" fill="#3f8fdc" stroke="#2a65b0" stroke-width=".7"/><path d="M3 5.8Q4 0.6 7.5 0.8Q10.8 1 11 5.8Z" fill="#62aef0" stroke="#2a65b0" stroke-width=".6"/><path d="M5 3.5Q6 2 8 2" stroke="#cfe6ff" stroke-width=".8" fill="none"/><path d="M10.5 9.5L13.5 12.5L11 15L8 12Z" fill="#f2b84a" stroke="#666" stroke-width=".7"/></svg><div class="t" style="left:61.40px;top:403.44px;font-size:10px;color:#1e1e1e;transform:scaleX(1.0177);transform-origin:0 0;">Moving Average</div><svg style="left:43px;top:415.15px;" width="16" height="16" viewBox="0 0 16 16"><path d="M2.8 7Q7 15 11.2 7Z" fill="#f7c830" stroke="#d09010" stroke-width=".6"/><ellipse cx="7" cy="6" rx="6.6" ry="2.4" fill="#3f8fdc" stroke="#2a65b0" stroke-width=".7"/><path d="M3 5.8Q4 0.6 7.5 0.8Q10.8 1 11 5.8Z" fill="#62aef0" stroke="#2a65b0" stroke-width=".6"/><path d="M5 3.5Q6 2 8 2" stroke="#cfe6ff" stroke-width=".8" fill="none"/><path d="M10.5 9.5L13.5 12.5L11 15L8 12Z" fill="#8a8a8a" stroke="#666" stroke-width=".7"/></svg><div class="t" style="left:61.40px;top:418.49px;font-size:10px;color:#1e1e1e;transform:scaleX(1.0222);transform-origin:0 0;">MTrading - Alarm Manager</div><svg style="left:43px;top:430.2px;" width="16" height="16" viewBox="0 0 16 16"><path d="M2.8 7Q7 15 11.2 7Z" fill="#f7c830" stroke="#d09010" stroke-width=".6"/><ellipse cx="7" cy="6" rx="6.6" ry="2.4" fill="#3f8fdc" stroke="#2a65b0" stroke-width=".7"/><path d="M3 5.8Q4 0.6 7.5 0.8Q10.8 1 11 5.8Z" fill="#62aef0" stroke="#2a65b0" stroke-width=".6"/><path d="M5 3.5Q6 2 8 2" stroke="#cfe6ff" stroke-width=".8" fill="none"/><path d="M10.5 9.5L13.5 12.5L11 15L8 12Z" fill="#8a8a8a" stroke="#666" stroke-width=".7"/></svg><div class="t" style="left:61.40px;top:433.54px;font-size:10px;color:#1e1e1e;transform:scaleX(1.0250);transform-origin:0 0;">MTrading - Connect</div><svg style="left:43px;top:445.25px;" width="16" height="16" viewBox="0 0 16 16"><path d="M2.8 7Q7 15 11.2 7Z" fill="#f7c830" stroke="#d09010" stroke-width=".6"/><ellipse cx="7" cy="6" rx="6.6" ry="2.4" fill="#3f8fdc" stroke="#2a65b0" stroke-width=".7"/><path d="M3 5.8Q4 0.6 7.5 0.8Q10.8 1 11 5.8Z" fill="#62aef0" stroke="#2a65b0" stroke-width=".6"/><path d="M5 3.5Q6 2 8 2" stroke="#cfe6ff" stroke-width=".8" fill="none"/><path d="M10.5 9.5L13.5 12.5L11 15L8 12Z" fill="#8a8a8a" stroke="#666" stroke-width=".7"/></svg><div class="t" style="left:61.40px;top:448.59px;font-size:10px;color:#1e1e1e;transform:scaleX(1.0293);transform-origin:0 0;">MTrading - Correlation Mat</div><svg style="left:43px;top:460.3px;" width="16" height="16" viewBox="0 0 16 16"><path d="M2.8 7Q7 15 11.2 7Z" fill="#f7c830" stroke="#d09010" stroke-width=".6"/><ellipse cx="7" cy="6" rx="6.6" ry="2.4" fill="#3f8fdc" stroke="#2a65b0" stroke-width=".7"/><path d="M3 5.8Q4 0.6 7.5 0.8Q10.8 1 11 5.8Z" fill="#62aef0" stroke="#2a65b0" stroke-width=".6"/><path d="M5 3.5Q6 2 8 2" stroke="#cfe6ff" stroke-width=".8" fill="none"/><path d="M10.5 9.5L13.5 12.5L11 15L8 12Z" fill="#8a8a8a" stroke="#666" stroke-width=".7"/></svg><div class="t" style="left:61.40px;top:463.64px;font-size:10px;color:#1e1e1e;transform:scaleX(1.0058);transform-origin:0 0;">MTrading - Correlation Trac</div><svg style="left:43px;top:475.35px;" width="16" height="16" viewBox="0 0 16 16"><path d="M2.8 7Q7 15 11.2 7Z" fill="#f7c830" stroke="#d09010" stroke-width=".6"/><ellipse cx="7" cy="6" rx="6.6" ry="2.4" fill="#3f8fdc" stroke="#2a65b0" stroke-width=".7"/><path d="M3 5.8Q4 0.6 7.5 0.8Q10.8 1 11 5.8Z" fill="#62aef0" stroke="#2a65b0" stroke-width=".6"/><path d="M5 3.5Q6 2 8 2" stroke="#cfe6ff" stroke-width=".8" fill="none"/><path d="M10.5 9.5L13.5 12.5L11 15L8 12Z" fill="#8a8a8a" stroke="#666" stroke-width=".7"/></svg><div class="t" style="left:61.40px;top:478.69px;font-size:10px;color:#1e1e1e;transform:scaleX(0.9648);transform-origin:0 0;">MTrading - Excel RTD</div><svg style="left:43px;top:490.4px;" width="16" height="16" viewBox="0 0 16 16"><path d="M2.8 7Q7 15 11.2 7Z" fill="#f7c830" stroke="#d09010" stroke-width=".6"/><ellipse cx="7" cy="6" rx="6.6" ry="2.4" fill="#3f8fdc" stroke="#2a65b0" stroke-width=".7"/><path d="M3 5.8Q4 0.6 7.5 0.8Q10.8 1 11 5.8Z" fill="#62aef0" stroke="#2a65b0" stroke-width=".6"/><path d="M5 3.5Q6 2 8 2" stroke="#cfe6ff" stroke-width=".8" fill="none"/><path d="M10.5 9.5L13.5 12.5L11 15L8 12Z" fill="#8a8a8a" stroke="#666" stroke-width=".7"/></svg><div class="t" style="left:61.40px;top:493.74px;font-size:10px;color:#1e1e1e;transform:scaleX(1.1750);transform-origin:0 0;">MTrading - Market M</div><div class="b" style="left:184px;top:308px;width:3px;height:188px;background:#fafafc"></div><div class="b" style="left:186px;top:308px;width:13px;height:188px;background:#ececec"></div><svg style="left:187px;top:315px;" width="10" height="7" viewBox="0 0 10 7"><path d="M1 6L5 2L9 6" stroke="#333" stroke-width="1.4" fill="none"/></svg><div class="b" style="left:187px;top:328px;width:11px;height:89px;background:#cdcdcd"></div><svg style="left:187px;top:486px;" width="10" height="7" viewBox="0 0 10 7"><path d="M1 1L5 5L9 1" stroke="#333" stroke-width="1.4" fill="none"/></svg><div class="b" style="left:3px;top:496px;width:199px;height:20px;background:#ececee"></div><div class="b" style="left:3px;top:496px;width:199px;height:1px;background:#404040"></div><div class="b" style="left:5px;top:496px;width:59.5px;height:18px;background:#fafafc;border:1px solid #333;border-top:none"></div><div class="t" style="left:14.00px;top:500.54px;font-size:10px;color:#1e1e1e;transform:scaleX(1.0106);transform-origin:0 0;">Common</div><div class="t" style="left:73.00px;top:500.54px;font-size:10px;color:#808080;transform:scaleX(0.9848);transform-origin:0 0;">Favorites</div><div class="b" style="left:121px;top:499px;width:1px;height:11px;background:#888"></div><div class="b" style="left:203px;top:500px;width:1392px;height:22px;background:#ececee"></div><div class="b" style="left:203px;top:502px;width:1px;height:16px;background:#555"></div><div class="t" style="left:215.00px;top:505.54px;font-size:10px;color:#7a7a7a;transform:scaleX(0.9032);transform-origin:0 0;">EURUSD,M5</div><div class="t" style="left:286.00px;top:505.54px;font-size:10px;color:#7a7a7a;transform:scaleX(0.9391);transform-origin:0 0;">USDCHF,H4</div><div class="t" style="left:357.20px;top:505.54px;font-size:10px;color:#7a7a7a;transform:scaleX(0.8945);transform-origin:0 0;">GBPUSD,H4</div><div class="t" style="left:427.50px;top:505.54px;font-size:10px;color:#7a7a7a;transform:scaleX(0.9139);transform-origin:0 0;">USDJPY,H4</div><div class="t" style="left:493.90px;top:505.54px;font-size:10px;color:#7a7a7a;transform:scaleX(0.8948);transform-origin:0 0;">EURUSD,M5</div><div class="t" style="left:564.00px;top:505.54px;font-size:10px;color:#7a7a7a;transform:scaleX(0.8982);transform-origin:0 0;">EURUSD,M5</div><div class="t" style="left:635.80px;top:505.54px;font-size:10px;color:#7a7a7a;transform:scaleX(0.8971);transform-origin:0 0;">USDJPY,H4</div><div class="t" style="left:701.70px;top:505.54px;font-size:10px;color:#7a7a7a;transform:scaleX(0.9343);transform-origin:0 0;">USDJPY,H4 (visual)</div><div class="b" style="left:278px;top:504px;width:1px;height:11px;background:#999"></div><div class="b" style="left:348px;top:504px;width:1px;height:11px;background:#999"></div><div class="b" style="left:419px;top:504px;width:1px;height:11px;background:#999"></div><div class="b" style="left:485px;top:504px;width:1px;height:11px;background:#999"></div><div class="b" style="left:556px;top:504px;width:1px;height:11px;background:#999"></div><div class="b" style="left:627px;top:504px;width:1px;height:11px;background:#999"></div><div class="b" style="left:694px;top:504px;width:1px;height:11px;background:#999"></div><div class="b" style="left:794.5px;top:501.5px;width:100px;height:16.5px;background:#fafafc;border:1px solid #333;border-top:none"></div><div class="t" style="left:802.50px;top:505.54px;font-size:10px;color:#1e1e1e;transform:scaleX(0.9297);transform-origin:0 0;">USDJPY,H4 (visual)</div><svg style="left:1580px;top:505px;" width="6" height="8" viewBox="0 0 6 8"><path d="M5 0V8L0 4Z" fill="#666"/></svg><div class="b" style="left:203px;top:519px;width:1392px;height:1px;background:#d0d0d0"></div><div class="b" style="left:0px;top:520px;width:1595px;height:1.5px;background:#b8b8b8"></div><div class="b" style="left:0px;top:521px;width:1595px;height:310px;background:#eeeff1"></div><div class="b" style="left:14px;top:522px;width:1581px;height:287px;background:#f9f9fb"></div><div class="b" style="left:13px;top:522px;width:1px;height:287px;background:#c0c0c0"></div><div class="t" style="left:2.79px;top:520.69px;font-size:11px;color:#111;font-weight:bold;">×</div><div class="b" style="left:1px;top:534px;width:11px;height:295px;background:#a9c3e3"></div><div class="t" style="left:1.5px;top:797px;width:11px;height:29px;"><div style="position:absolute;left:0px;top:29px;transform:rotate(-90deg);transform-origin:0 0;font-size:8.5px;color:#1e1e1e;line-height:11px;white-space:pre">Tester</div></div><div class="b" style="left:19.5px;top:530px;width:100.5px;height:17.5px;background:#c8c8c8;border:1px solid #c0c0c0"></div><svg style="left:108.0px;top:536.25px;" width="8" height="5" viewBox="0 0 8 5"><path d="M1 1L4 4L7 1" stroke="#999" fill="none" stroke-width="1"/></svg><div class="t" style="left:23.00px;top:534.88px;font-size:9px;color:#6e6e6e;transform:scaleX(0.9823);transform-origin:0 0;">Expert Advisor</div><div class="b" style="left:126.5px;top:530px;width:1340px;height:17.5px;background:#f0f0f0;border:1px solid #c6c6c6"></div><svg style="left:1454.5px;top:536.25px;" width="8" height="5" viewBox="0 0 8 5"><path d="M1 1L4 4L7 1" stroke="#888" fill="none" stroke-width="1"/></svg><div class="b" style="left:127.5px;top:531px;width:1311px;height:15.5px;background:#ebebeb"></div><div class="t" style="left:128.70px;top:534.88px;font-size:9px;color:#6e6e6e;transform:scaleX(0.9709);transform-origin:0 0;">MasterCandle EA.ex4</div><div class="b" style="left:1473px;top:530px;width:130px;height:18px;background:#e9e9e9;border:1px solid #adadad"></div><div class="t" style="left:1502.00px;top:534.68px;font-size:9px;color:#333;transform:scaleX(0.9630);transform-origin:0 0;">Expert properties</div><div class="t" style="left:89.00px;top:559.88px;font-size:9px;color:#5a5a5a;transform:scaleX(0.9381);transform-origin:0 0;">Symbol:</div><div class="b" style="left:126.5px;top:555px;width:1128px;height:17px;background:#c8c8c8;border:1px solid #c4c4c4"></div><svg style="left:1242.5px;top:561.0px;" width="8" height="5" viewBox="0 0 8 5"><path d="M1 1L4 4L7 1" stroke="#999" fill="none" stroke-width="1"/></svg><div class="t" style="left:129.00px;top:559.88px;font-size:9px;color:#6e6e6e;">USDJPY, US Dollar vs Japanese Yen</div><div class="t" style="left:1333.00px;top:559.88px;font-size:9px;color:#5a5a5a;transform:scaleX(0.9644);transform-origin:0 0;">Period:</div><div class="b" style="left:1366.3px;top:555px;width:100px;height:17px;background:#c8c8c8;border:1px solid #c4c4c4"></div><svg style="left:1454.3px;top:561.0px;" width="8" height="5" viewBox="0 0 8 5"><path d="M1 1L4 4L7 1" stroke="#999" fill="none" stroke-width="1"/></svg><div class="t" style="left:1369.50px;top:559.88px;font-size:9px;color:#6e6e6e;transform:scaleX(0.9127);transform-origin:0 0;">H4</div><div class="b" style="left:1473px;top:555px;width:130px;height:17.5px;background:#e9e9e9;border:1px solid #adadad"></div><div class="t" style="left:1500.50px;top:559.43px;font-size:9px;color:#333;transform:scaleX(0.9513);transform-origin:0 0;">Symbol properties</div><div class="t" style="left:93.50px;top:583.88px;font-size:9px;color:#5a5a5a;transform:scaleX(0.9625);transform-origin:0 0;">Model:</div><div class="b" style="left:126.5px;top:579px;width:1128px;height:17.5px;background:#c8c8c8;border:1px solid #c4c4c4"></div><svg style="left:1242.5px;top:585.25px;" width="8" height="5" viewBox="0 0 8 5"><path d="M1 1L4 4L7 1" stroke="#999" fill="none" stroke-width="1"/></svg><div class="t" style="left:129.00px;top:583.88px;font-size:9px;color:#6e6e6e;transform:scaleX(0.9777);transform-origin:0 0;">Control points (a very crude method based on the nearest less timeframe, the results must not be considered)</div><div class="t" style="left:1329.50px;top:583.88px;font-size:9px;color:#5a5a5a;transform:scaleX(0.9834);transform-origin:0 0;">Spread:</div><div class="b" style="left:1366.3px;top:579px;width:100px;height:17.5px;background:#f4f4f4;border:1px solid #c8c8c8"></div><svg style="left:1454.3px;top:585.25px;" width="8" height="5" viewBox="0 0 8 5"><path d="M1 1L4 4L7 1" stroke="#888" fill="none" stroke-width="1"/></svg><div class="b" style="left:1367.3px;top:580px;width:67px;height:15.5px;background:#ececec"></div><div class="t" style="left:1368.50px;top:583.88px;font-size:9px;color:#5a5a5a;transform:scaleX(0.9330);transform-origin:0 0;">Current</div><div class="b" style="left:1473px;top:579px;width:130px;height:18px;background:#e9e9e9;border:1px solid #adadad"></div><div class="t" style="left:1513.00px;top:583.68px;font-size:9px;color:#333;transform:scaleX(0.9882);transform-origin:0 0;">Open chart</div><div class="t" style="left:75.20px;top:610.38px;font-size:9px;color:#5a5a5a;transform:scaleX(0.9605);transform-origin:0 0;">Use date</div><div class="b" style="left:113px;top:606.5px;width:12.5px;height:12.5px;background:#fff;border:1px solid #444"></div><svg style="left:116px;top:609.0px;" width="7" height="7" viewBox="0 0 7 7"><path d="M0.7 3.5L2.8 6L6.3 0.7" stroke="#111" stroke-width="1.3" fill="none"/></svg><div class="t" style="left:204.40px;top:607.88px;font-size:9px;color:#5a5a5a;transform:scaleX(0.9065);transform-origin:0 0;">From:</div><div class="b" style="left:232px;top:603.5px;width:100.5px;height:16.5px;background:#fbfbfb;border:1px solid #7a7a7a"></div><div class="t" style="left:234.50px;top:607.43px;font-size:9px;color:#6e6e6e;">2010.01.01</div><svg style="left:309.5px;top:606.5px;" width="16" height="11" viewBox="0 0 16 11"><rect x="0.5" y="0.5" width="8" height="9" fill="#f4f4f4" stroke="#aaa"/><path d="M2 3H7M2 5H7M2 7H7" stroke="#bbb" stroke-width=".6"/><path d="M11 4H16L13.5 7Z" fill="#bbb"/></svg><div class="b" style="left:233px;top:611.5px;width:20px;height:16px;background:#fbfbfb;border:1px solid #767676"></div><div class="t" style="left:238.25px;top:615.38px;font-size:9px;color:#555;transform:scaleX(0.9490);transform-origin:0 0;">25</div><div class="t" style="left:426.40px;top:607.88px;font-size:9px;color:#5a5a5a;transform:scaleX(1.0495);transform-origin:0 0;">To:</div><div class="b" style="left:445px;top:603.5px;width:100.5px;height:16.5px;background:#fbfbfb;border:1px solid #7a7a7a"></div><div class="t" style="left:447.50px;top:607.43px;font-size:9px;color:#777;">2018.04.02</div><svg style="left:522.5px;top:606.5px;" width="16" height="11" viewBox="0 0 16 11"><rect x="0.5" y="0.5" width="8" height="9" fill="#f4f4f4" stroke="#aaa"/><path d="M2 3H7M2 5H7M2 7H7" stroke="#bbb" stroke-width=".6"/><path d="M11 4H16L13.5 7Z" fill="#bbb"/></svg><div class="t" style="left:1402.80px;top:610.38px;font-size:9px;color:#5a5a5a;transform:scaleX(0.9596);transform-origin:0 0;">Optimization</div><div class="b" style="left:1454.5px;top:607.5px;width:12.5px;height:13px;background:#fff;border:1px solid #555"></div><div class="b" style="left:1473px;top:603.5px;width:130px;height:18px;background:#e9e9e9;border:1px solid #adadad"></div><div class="t" style="left:1509.50px;top:608.18px;font-size:9px;color:#333;transform:scaleX(0.9440);transform-origin:0 0;">Modify expert</div><div class="t" style="left:62.80px;top:634.88px;font-size:9px;color:#5a5a5a;transform:scaleX(0.9521);transform-origin:0 0;">Visual mode</div><div class="b" style="left:113px;top:631px;width:12.5px;height:12.5px;background:#fff;border:1px solid #444"></div><svg style="left:116px;top:633.5px;" width="7" height="7" viewBox="0 0 7 7"><path d="M0.7 3.5L2.8 6L6.3 0.7" stroke="#111" stroke-width="1.3" fill="none"/></svg><div class="b" style="left:137.5px;top:633.5px;width:138.5px;height:8px;background:#e6e8ea;border:1px solid #3a8fe0"></div><div class="b" style="left:240.3px;top:629.5px;width:7px;height:16px;background:#e4e6e8;border:1px solid #3a8fe0"></div><svg style="left:240px;top:634px;" width="12" height="18" viewBox="0 0 12 18"><path d="M1 1V14L4 11L6.5 16.5L8.5 15.5L6 10.5H10Z" fill="#fff" stroke="#222" stroke-width="1"/></svg><div class="b" style="left:288.5px;top:628px;width:19.5px;height:18.5px;background:#eaeaea;border:1px solid #a8a8a8"></div><div class="b" style="left:295px;top:633px;width:1.5px;height:8px;background:#666"></div><div class="b" style="left:299px;top:633px;width:1.5px;height:8px;background:#666"></div><div class="b" style="left:314px;top:628px;width:124.5px;height:18.5px;background:#eaeaea;border:1px solid #a8a8a8"></div><div class="t" style="left:362.50px;top:632.88px;font-size:9px;color:#1e1e1e;transform:scaleX(0.9813);transform-origin:0 0;">Skip to</div><div class="b" style="left:445px;top:627.5px;width:100.5px;height:16.5px;background:#fbfbfb;border:1px solid #7a7a7a"></div><div class="t" style="left:447.50px;top:631.43px;font-size:9px;color:#1e1e1e;">2018.05.29</div><svg style="left:522.5px;top:630.5px;" width="16" height="11" viewBox="0 0 16 11"><rect x="0.5" y="0.5" width="8" height="9" fill="#f4f4f4" stroke="#aaa"/><path d="M2 3H7M2 5H7M2 7H7" stroke="#bbb" stroke-width=".6"/><path d="M11 4H16L13.5 7Z" fill="#2a3f8f"/></svg><div class="b" style="left:19.5px;top:785.5px;width:1447px;height:16px;background:#e6e6e6;border:1px solid #bcbcbc"></div><div class="b" style="left:20.5px;top:786.5px;width:1040px;height:14px;background:#06ac20"></div><div class="b" style="left:1473px;top:784px;width:130px;height:19px;background:#ebebeb;border:1px solid #a0a0a0"></div><div class="t" style="left:1524.75px;top:789.88px;font-size:9px;color:#111;font-weight:bold;transform:scaleX(1.0753);transform-origin:0 0;">Stop</div><div class="b" style="left:14px;top:809px;width:1581px;height:1px;background:#777"></div><div class="b" style="left:15.5px;top:809px;width:51.5px;height:17.5px;background:#f8f8fa;border:1px solid #333;border-top:none"></div><div class="t" style="left:24.00px;top:812.53px;font-size:10px;color:#1e1e1e;transform:scaleX(0.9548);transform-origin:0 0;">Settings</div><div class="t" style="left:75.90px;top:812.53px;font-size:10px;color:#7a7a7a;transform:scaleX(0.9913);transform-origin:0 0;">Optimization Results</div><div class="t" style="left:184.00px;top:812.53px;font-size:10px;color:#7a7a7a;">Optimization Graph</div><div class="t" style="left:287.80px;top:812.53px;font-size:10px;color:#7a7a7a;transform:scaleX(0.9117);transform-origin:0 0;">Results</div><div class="t" style="left:335.40px;top:812.53px;font-size:10px;color:#7a7a7a;transform:scaleX(0.9570);transform-origin:0 0;">Graph</div><div class="t" style="left:379.30px;top:812.53px;font-size:10px;color:#7a7a7a;transform:scaleX(0.9562);transform-origin:0 0;">Report</div><div class="t" style="left:424.80px;top:812.53px;font-size:10px;color:#7a7a7a;transform:scaleX(0.9726);transform-origin:0 0;">Journal</div><div class="b" style="left:175.5px;top:812px;width:1px;height:11px;background:#999"></div><div class="b" style="left:279px;top:812px;width:1px;height:11px;background:#999"></div><div class="b" style="left:327px;top:812px;width:1px;height:11px;background:#999"></div><div class="b" style="left:371px;top:812px;width:1px;height:11px;background:#999"></div><div class="b" style="left:417px;top:812px;width:1px;height:11px;background:#999"></div><div class="b" style="left:466px;top:812px;width:1px;height:11px;background:#999"></div><div class="b" style="left:0px;top:829px;width:1595px;height:2px;background:#a8a8a8"></div><svg style="left:203px;top:61px" width="1392" height="439" viewBox="203 61 1392 439" shape-rendering="crispEdges"><rect x="203" y="61" width="1392" height="439" fill="#000"/><line x1="233.5" y1="64" x2="233.5" y2="483" stroke="#7e8c9c" stroke-width="1" stroke-dasharray="3 2"/><line x1="260.5" y1="64" x2="260.5" y2="483" stroke="#7e8c9c" stroke-width="1" stroke-dasharray="3 2"/><line x1="287.5" y1="64" x2="287.5" y2="483" stroke="#7e8c9c" stroke-width="1" stroke-dasharray="3 2"/><line x1="313.5" y1="64" x2="313.5" y2="483" stroke="#7e8c9c" stroke-width="1" stroke-dasharray="3 2"/><line x1="340.5" y1="64" x2="340.5" y2="483" stroke="#7e8c9c" stroke-width="1" stroke-dasharray="3 2"/><line x1="367.5" y1="64" x2="367.5" y2="483" stroke="#7e8c9c" stroke-width="1" stroke-dasharray="3 2"/><line x1="394.5" y1="64" x2="394.5" y2="483" stroke="#7e8c9c" stroke-width="1" stroke-dasharray="3 2"/><line x1="421.5" y1="64" x2="421.5" y2="483" stroke="#7e8c9c" stroke-width="1" stroke-dasharray="3 2"/><line x1="448.5" y1="64" x2="448.5" y2="483" stroke="#7e8c9c" stroke-width="1" stroke-dasharray="3 2"/><line x1="474.5" y1="64" x2="474.5" y2="483" stroke="#7e8c9c" stroke-width="1" stroke-dasharray="3 2"/><line x1="501.5" y1="64" x2="501.5" y2="483" stroke="#7e8c9c" stroke-width="1" stroke-dasharray="3 2"/><line x1="528.5" y1="64" x2="528.5" y2="483" stroke="#7e8c9c" stroke-width="1" stroke-dasharray="3 2"/><line x1="555.5" y1="64" x2="555.5" y2="483" stroke="#7e8c9c" stroke-width="1" stroke-dasharray="3 2"/><line x1="582.5" y1="64" x2="582.5" y2="483" stroke="#7e8c9c" stroke-width="1" stroke-dasharray="3 2"/><line x1="608.5" y1="64" x2="608.5" y2="483" stroke="#7e8c9c" stroke-width="1" stroke-dasharray="3 2"/><line x1="635.5" y1="64" x2="635.5" y2="483" stroke="#7e8c9c" stroke-width="1" stroke-dasharray="3 2"/><line x1="662.5" y1="64" x2="662.5" y2="483" stroke="#7e8c9c" stroke-width="1" stroke-dasharray="3 2"/><line x1="689.5" y1="64" x2="689.5" y2="483" stroke="#7e8c9c" stroke-width="1" stroke-dasharray="3 2"/><line x1="716.5" y1="64" x2="716.5" y2="483" stroke="#7e8c9c" stroke-width="1" stroke-dasharray="3 2"/><line x1="743.5" y1="64" x2="743.5" y2="483" stroke="#7e8c9c" stroke-width="1" stroke-dasharray="3 2"/><line x1="769.5" y1="64" x2="769.5" y2="483" stroke="#7e8c9c" stroke-width="1" stroke-dasharray="3 2"/><line x1="796.5" y1="64" x2="796.5" y2="483" stroke="#7e8c9c" stroke-width="1" stroke-dasharray="3 2"/><line x1="823.5" y1="64" x2="823.5" y2="483" stroke="#7e8c9c" stroke-width="1" stroke-dasharray="3 2"/><line x1="850.5" y1="64" x2="850.5" y2="483" stroke="#7e8c9c" stroke-width="1" stroke-dasharray="3 2"/><line x1="877.5" y1="64" x2="877.5" y2="483" stroke="#7e8c9c" stroke-width="1" stroke-dasharray="3 2"/><line x1="904.5" y1="64" x2="904.5" y2="483" stroke="#7e8c9c" stroke-width="1" stroke-dasharray="3 2"/><line x1="930.5" y1="64" x2="930.5" y2="483" stroke="#7e8c9c" stroke-width="1" stroke-dasharray="3 2"/><line x1="957.5" y1="64" x2="957.5" y2="483" stroke="#7e8c9c" stroke-width="1" stroke-dasharray="3 2"/><line x1="984.5" y1="64" x2="984.5" y2="483" stroke="#7e8c9c" stroke-width="1" stroke-dasharray="3 2"/><line x1="1011.5" y1="64" x2="1011.5" y2="483" stroke="#7e8c9c" stroke-width="1" stroke-dasharray="3 2"/><line x1="1038.5" y1="64" x2="1038.5" y2="483" stroke="#7e8c9c" stroke-width="1" stroke-dasharray="3 2"/><line x1="1064.5" y1="64" x2="1064.5" y2="483" stroke="#7e8c9c" stroke-width="1" stroke-dasharray="3 2"/><line x1="1091.5" y1="64" x2="1091.5" y2="483" stroke="#7e8c9c" stroke-width="1" stroke-dasharray="3 2"/><line x1="1118.5" y1="64" x2="1118.5" y2="483" stroke="#7e8c9c" stroke-width="1" stroke-dasharray="3 2"/><line x1="1145.5" y1="64" x2="1145.5" y2="483" stroke="#7e8c9c" stroke-width="1" stroke-dasharray="3 2"/><line x1="1172.5" y1="64" x2="1172.5" y2="483" stroke="#7e8c9c" stroke-width="1" stroke-dasharray="3 2"/><line x1="1199.5" y1="64" x2="1199.5" y2="483" stroke="#7e8c9c" stroke-width="1" stroke-dasharray="3 2"/><line x1="1225.5" y1="64" x2="1225.5" y2="483" stroke="#7e8c9c" stroke-width="1" stroke-dasharray="3 2"/><line x1="1252.5" y1="64" x2="1252.5" y2="483" stroke="#7e8c9c" stroke-width="1" stroke-dasharray="3 2"/><line x1="1279.5" y1="64" x2="1279.5" y2="483" stroke="#7e8c9c" stroke-width="1" stroke-dasharray="3 2"/><line x1="1306.5" y1="64" x2="1306.5" y2="483" stroke="#7e8c9c" stroke-width="1" stroke-dasharray="3 2"/><line x1="1333.5" y1="64" x2="1333.5" y2="483" stroke="#7e8c9c" stroke-width="1" stroke-dasharray="3 2"/><line x1="1359.5" y1="64" x2="1359.5" y2="483" stroke="#7e8c9c" stroke-width="1" stroke-dasharray="3 2"/><line x1="1386.5" y1="64" x2="1386.5" y2="483" stroke="#7e8c9c" stroke-width="1" stroke-dasharray="3 2"/><line x1="1413.5" y1="64" x2="1413.5" y2="483" stroke="#7e8c9c" stroke-width="1" stroke-dasharray="3 2"/><line x1="1440.5" y1="64" x2="1440.5" y2="483" stroke="#7e8c9c" stroke-width="1" stroke-dasharray="3 2"/><line x1="1467.5" y1="64" x2="1467.5" y2="483" stroke="#7e8c9c" stroke-width="1" stroke-dasharray="3 2"/><line x1="1494.5" y1="64" x2="1494.5" y2="483" stroke="#7e8c9c" stroke-width="1" stroke-dasharray="3 2"/><line x1="1520.5" y1="64" x2="1520.5" y2="483" stroke="#7e8c9c" stroke-width="1" stroke-dasharray="3 2"/><line x1="1547.5" y1="64" x2="1547.5" y2="483" stroke="#7e8c9c" stroke-width="1" stroke-dasharray="3 2"/><line x1="206" y1="65.5" x2="1572" y2="65.5" stroke="#7e8c9c" stroke-width="1" stroke-dasharray="3 2"/><line x1="206" y1="93.5" x2="1572" y2="93.5" stroke="#7e8c9c" stroke-width="1" stroke-dasharray="3 2"/><line x1="206" y1="120.5" x2="1572" y2="120.5" stroke="#7e8c9c" stroke-width="1" stroke-dasharray="3 2"/><line x1="206" y1="148.5" x2="1572" y2="148.5" stroke="#7e8c9c" stroke-width="1" stroke-dasharray="3 2"/><line x1="206" y1="176.5" x2="1572" y2="176.5" stroke="#7e8c9c" stroke-width="1" stroke-dasharray="3 2"/><line x1="206" y1="203.5" x2="1572" y2="203.5" stroke="#7e8c9c" stroke-width="1" stroke-dasharray="3 2"/><line x1="206" y1="231.5" x2="1572" y2="231.5" stroke="#7e8c9c" stroke-width="1" stroke-dasharray="3 2"/><line x1="206" y1="259.5" x2="1572" y2="259.5" stroke="#7e8c9c" stroke-width="1" stroke-dasharray="3 2"/><line x1="206" y1="286.5" x2="1572" y2="286.5" stroke="#7e8c9c" stroke-width="1" stroke-dasharray="3 2"/><line x1="206" y1="314.5" x2="1572" y2="314.5" stroke="#7e8c9c" stroke-width="1" stroke-dasharray="3 2"/><line x1="206" y1="342.5" x2="1572" y2="342.5" stroke="#7e8c9c" stroke-width="1" stroke-dasharray="3 2"/><line x1="206" y1="369.5" x2="1572" y2="369.5" stroke="#7e8c9c" stroke-width="1" stroke-dasharray="3 2"/><line x1="206" y1="397.5" x2="1572" y2="397.5" stroke="#7e8c9c" stroke-width="1" stroke-dasharray="3 2"/><line x1="206" y1="425.5" x2="1572" y2="425.5" stroke="#7e8c9c" stroke-width="1" stroke-dasharray="3 2"/><line x1="206" y1="452.5" x2="1572" y2="452.5" stroke="#7e8c9c" stroke-width="1" stroke-dasharray="3 2"/><line x1="206" y1="480.5" x2="1572" y2="480.5" stroke="#7e8c9c" stroke-width="1" stroke-dasharray="3 2"/><line x1="206" y1="221.5" x2="1572" y2="221.5" stroke="#a0a8b0" stroke-width="1"/><rect x="205" y="63" width="2" height="421" fill="#c4c4c4"/><rect x="205" y="63" width="1368" height="1" fill="#c8c8c8"/><rect x="1572" y="63" width="1" height="421" fill="#d0d0d0"/><rect x="205" y="483" width="1368" height="1" fill="#c8c8c8"/><path d="M206 290h2V327h-2ZM204 308h2v1h-2ZM208 308h2v1h-2ZM213 295h1V333h-1ZM211 308h2v1h-2ZM214 320h2v1h-2ZM219 320h2V386h-2ZM217 320h2v1h-2ZM221 374h2v1h-2ZM226 372h2V434h-2ZM224 374h2v1h-2ZM228 422h2v1h-2ZM233 409h1V444h-1ZM231 422h2v1h-2ZM234 424h2v1h-2ZM240 400h1V429h-1ZM238 424h2v1h-2ZM241 411h2v1h-2ZM246 409h2V439h-2ZM244 411h2v1h-2ZM248 417h2v1h-2ZM253 410h1V435h-1ZM251 417h2v1h-2ZM254 412h2v1h-2ZM260 409h1V433h-1ZM258 412h2v1h-2ZM261 424h2v1h-2ZM266 417h2V435h-2ZM264 424h2v1h-2ZM268 426h2v1h-2ZM273 393h2V428h-2ZM271 426h2v1h-2ZM275 408h2v1h-2ZM280 383h1V416h-1ZM278 408h2v1h-2ZM281 385h2v1h-2ZM287 376h1V409h-1ZM285 385h2v1h-2ZM288 394h2v1h-2ZM293 380h2V413h-2ZM291 394h2v1h-2ZM295 402h2v1h-2ZM300 372h1V407h-1ZM298 402h2v1h-2ZM301 375h2v1h-2ZM307 368h1V388h-1ZM305 375h2v1h-2ZM308 385h2v1h-2ZM313 359h2V399h-2ZM311 385h2v1h-2ZM315 396h2v1h-2ZM320 390h2V411h-2ZM318 396h2v1h-2ZM322 400h2v1h-2ZM327 391h1V433h-1ZM325 400h2v1h-2ZM328 416h2v1h-2ZM333 412h2V468h-2ZM331 416h2v1h-2ZM335 464h2v1h-2ZM340 416h2V474h-2ZM338 464h2v1h-2ZM342 444h2v1h-2ZM347 434h1V452h-1ZM345 444h2v1h-2ZM348 438h2v1h-2ZM354 408h1V462h-1ZM352 438h2v1h-2ZM355 411h2v1h-2ZM360 408h2V435h-2ZM358 411h2v1h-2ZM362 428h2v1h-2ZM367 409h1V434h-1ZM365 428h2v1h-2ZM368 420h2v1h-2ZM374 400h1V432h-1ZM372 420h2v1h-2ZM375 417h2v1h-2ZM380 388h2V441h-2ZM378 417h2v1h-2ZM382 418h2v1h-2ZM387 366h2V444h-2ZM385 418h2v1h-2ZM389 388h2v1h-2ZM394 361h1V403h-1ZM392 388h2v1h-2ZM395 367h2v1h-2ZM401 367h1V403h-1ZM399 367h2v1h-2ZM402 376h2v1h-2ZM407 375h2V403h-2ZM405 376h2v1h-2ZM409 389h2v1h-2ZM414 310h1V391h-1ZM412 389h2v1h-2ZM415 318h2v1h-2ZM421 298h1V361h-1ZM419 318h2v1h-2ZM422 328h2v1h-2ZM427 317h2V350h-2ZM425 328h2v1h-2ZM429 328h2v1h-2ZM434 303h2V336h-2ZM432 328h2v1h-2ZM436 312h2v1h-2ZM441 300h1V329h-1ZM439 312h2v1h-2ZM442 303h2v1h-2ZM447 254h2V305h-2ZM445 303h2v1h-2ZM449 272h2v1h-2ZM454 259h2V290h-2ZM452 272h2v1h-2ZM456 282h2v1h-2ZM461 249h1V355h-1ZM459 282h2v1h-2ZM462 250h2v1h-2ZM468 234h1V262h-1ZM466 250h2v1h-2ZM469 249h2v1h-2ZM474 226h2V278h-2ZM472 249h2v1h-2ZM476 267h2v1h-2ZM481 232h1V268h-1ZM479 267h2v1h-2ZM482 246h2v1h-2ZM488 231h1V278h-1ZM486 246h2v1h-2ZM489 260h2v1h-2ZM494 218h2V283h-2ZM492 260h2v1h-2ZM496 220h2v1h-2ZM501 202h2V398h-2ZM499 220h2v1h-2ZM503 318h2v1h-2ZM508 278h1V330h-1ZM506 318h2v1h-2ZM509 294h2v1h-2ZM514 199h2V253h-2ZM512 252h2v1h-2ZM516 227h2v1h-2ZM521 207h2V229h-2ZM519 227h2v1h-2ZM523 210h2v1h-2ZM528 175h1V215h-1ZM526 210h2v1h-2ZM529 199h2v1h-2ZM535 179h1V209h-1ZM533 199h2v1h-2ZM536 191h2v1h-2ZM541 173h2V230h-2ZM539 191h2v1h-2ZM543 206h2v1h-2ZM548 206h2V271h-2ZM546 206h2v1h-2ZM550 265h2v1h-2ZM555 242h1V269h-1ZM553 265h2v1h-2ZM556 257h2v1h-2ZM561 235h2V261h-2ZM559 257h2v1h-2ZM563 241h2v1h-2ZM568 226h2V256h-2ZM566 241h2v1h-2ZM570 250h2v1h-2ZM575 225h1V266h-1ZM573 250h2v1h-2ZM576 239h2v1h-2ZM582 203h1V244h-1ZM580 239h2v1h-2ZM583 224h2v1h-2ZM588 204h2V250h-2ZM586 224h2v1h-2ZM590 242h2v1h-2ZM595 235h1V270h-1ZM593 242h2v1h-2ZM596 258h2v1h-2ZM602 258h1V310h-1ZM600 258h2v1h-2ZM603 308h2v1h-2ZM608 284h2V321h-2ZM606 308h2v1h-2ZM610 298h2v1h-2ZM615 286h2V315h-2ZM613 298h2v1h-2ZM617 292h2v1h-2ZM622 268h1V299h-1ZM620 292h2v1h-2ZM623 286h2v1h-2ZM628 277h2V300h-2ZM626 286h2v1h-2ZM630 280h2v1h-2ZM635 254h2V290h-2ZM633 280h2v1h-2ZM637 257h2v1h-2ZM642 247h1V273h-1ZM640 257h2v1h-2ZM643 250h2v1h-2ZM649 227h1V253h-1ZM647 250h2v1h-2ZM650 250h2v1h-2ZM655 212h2V243h-2ZM653 242h2v1h-2ZM657 231h2v1h-2ZM662 213h1V243h-1ZM660 231h2v1h-2ZM663 216h2v1h-2ZM669 164h1V222h-1ZM667 216h2v1h-2ZM670 174h2v1h-2ZM675 134h2V176h-2ZM673 174h2v1h-2ZM677 137h2v1h-2ZM682 133h2V150h-2ZM680 137h2v1h-2ZM684 134h2v1h-2ZM689 108h1V136h-1ZM687 134h2v1h-2ZM690 111h2v1h-2ZM696 110h1V155h-1ZM694 111h2v1h-2ZM697 141h2v1h-2ZM702 107h2V170h-2ZM700 141h2v1h-2ZM704 117h2v1h-2ZM709 114h1V127h-1ZM707 117h2v1h-2ZM710 125h2v1h-2ZM716 94h1V127h-1ZM714 125h2v1h-2ZM717 104h2v1h-2ZM722 100h2V120h-2ZM720 104h2v1h-2ZM724 111h2v1h-2ZM729 109h2V144h-2ZM727 111h2v1h-2ZM731 137h2v1h-2ZM736 127h1V155h-1ZM734 137h2v1h-2ZM737 132h2v1h-2ZM742 126h2V150h-2ZM740 132h2v1h-2ZM744 127h2v1h-2ZM749 109h2V129h-2ZM747 127h2v1h-2ZM751 112h2v1h-2ZM756 109h1V128h-1ZM754 112h2v1h-2ZM757 126h2v1h-2ZM763 117h1V129h-1ZM761 126h2v1h-2ZM764 126h2v1h-2ZM769 119h2V138h-2ZM767 126h2v1h-2ZM771 126h2v1h-2ZM776 113h1V131h-1ZM774 126h2v1h-2ZM777 120h2v1h-2ZM783 85h1V138h-1ZM781 120h2v1h-2ZM784 102h2v1h-2ZM789 100h2V122h-2ZM787 102h2v1h-2ZM791 112h2v1h-2ZM796 109h2V132h-2ZM794 112h2v1h-2ZM798 116h2v1h-2ZM803 119h1V170h-1ZM801 119h2v1h-2ZM804 143h2v1h-2ZM810 126h1V146h-1ZM808 143h2v1h-2ZM811 133h2v1h-2ZM816 129h2V193h-2ZM814 133h2v1h-2ZM818 178h2v1h-2ZM823 149h1V187h-1ZM821 178h2v1h-2ZM824 168h2v1h-2ZM830 167h1V259h-1ZM828 168h2v1h-2ZM831 247h2v1h-2ZM836 213h2V248h-2ZM834 247h2v1h-2ZM838 238h2v1h-2ZM843 226h2V247h-2ZM841 238h2v1h-2ZM845 242h2v1h-2ZM850 201h1V243h-1ZM848 242h2v1h-2ZM851 215h2v1h-2ZM856 208h2V243h-2ZM854 215h2v1h-2ZM858 217h2v1h-2ZM863 212h2V275h-2ZM861 217h2v1h-2ZM865 271h2v1h-2ZM870 262h1V311h-1ZM868 271h2v1h-2ZM871 266h2v1h-2ZM877 265h1V288h-1ZM875 266h2v1h-2ZM878 271h2v1h-2ZM883 266h2V305h-2ZM881 271h2v1h-2ZM885 286h2v1h-2ZM890 282h1V316h-1ZM888 286h2v1h-2ZM891 298h2v1h-2ZM897 283h1V304h-1ZM895 298h2v1h-2ZM898 288h2v1h-2ZM903 220h2V292h-2ZM901 288h2v1h-2ZM905 227h2v1h-2ZM910 220h2V246h-2ZM908 227h2v1h-2ZM912 239h2v1h-2ZM917 208h1V265h-1ZM915 239h2v1h-2ZM918 234h2v1h-2ZM924 226h1V241h-1ZM922 234h2v1h-2ZM925 230h2v1h-2ZM930 220h2V239h-2ZM928 230h2v1h-2ZM932 235h2v1h-2ZM937 230h1V260h-1ZM935 235h2v1h-2ZM938 250h2v1h-2ZM944 244h1V279h-1ZM942 250h2v1h-2ZM945 256h2v1h-2ZM950 237h2V263h-2ZM948 256h2v1h-2ZM952 248h2v1h-2ZM957 230h2V249h-2ZM955 248h2v1h-2ZM959 238h2v1h-2ZM964 232h1V243h-1ZM962 238h2v1h-2ZM965 240h2v1h-2ZM970 234h2V253h-2ZM968 240h2v1h-2ZM972 237h2v1h-2ZM977 211h2V247h-2ZM975 237h2v1h-2ZM979 213h2v1h-2ZM984 177h1V223h-1ZM982 213h2v1h-2ZM985 179h2v1h-2ZM991 175h1V207h-1ZM989 179h2v1h-2ZM992 200h2v1h-2ZM997 184h2V209h-2ZM995 200h2v1h-2ZM999 199h2v1h-2ZM1004 176h1V206h-1ZM1002 199h2v1h-2ZM1005 191h2v1h-2ZM1011 163h1V193h-1ZM1009 191h2v1h-2ZM1012 166h2v1h-2ZM1017 146h2V174h-2ZM1015 166h2v1h-2ZM1019 148h2v1h-2ZM1024 137h2V172h-2ZM1022 148h2v1h-2ZM1026 143h2v1h-2ZM1031 123h1V152h-1ZM1029 143h2v1h-2ZM1032 134h2v1h-2ZM1037 130h2V160h-2ZM1035 134h2v1h-2ZM1039 143h2v1h-2ZM1044 125h2V144h-2ZM1042 143h2v1h-2ZM1046 132h2v1h-2ZM1051 100h1V137h-1ZM1049 132h2v1h-2ZM1052 121h2v1h-2ZM1058 109h1V137h-1ZM1056 121h2v1h-2ZM1059 134h2v1h-2ZM1064 115h2V142h-2ZM1062 134h2v1h-2ZM1066 124h2v1h-2ZM1071 120h1V150h-1ZM1069 124h2v1h-2ZM1072 143h2v1h-2ZM1078 133h1V151h-1ZM1076 143h2v1h-2ZM1079 145h2v1h-2ZM1084 138h2V149h-2ZM1082 145h2v1h-2ZM1086 144h2v1h-2ZM1091 125h2V146h-2ZM1089 144h2v1h-2ZM1093 139h2v1h-2ZM1098 130h1V144h-1ZM1096 139h2v1h-2ZM1099 134h2v1h-2ZM1105 127h1V153h-1ZM1103 134h2v1h-2ZM1106 150h2v1h-2ZM1111 142h2V154h-2ZM1109 150h2v1h-2ZM1113 150h2v1h-2ZM1118 139h1V147h-1ZM1116 146h2v1h-2ZM1119 141h2v1h-2ZM1125 141h1V150h-1ZM1123 141h2v1h-2ZM1126 146h2v1h-2ZM1131 141h2V149h-2ZM1129 146h2v1h-2ZM1133 146h2v1h-2ZM1138 142h2V152h-2ZM1136 146h2v1h-2ZM1140 150h2v1h-2ZM1145 148h1V164h-1ZM1143 150h2v1h-2ZM1146 161h2v1h-2ZM1151 153h2V171h-2ZM1149 161h2v1h-2ZM1153 155h2v1h-2ZM1158 137h2V167h-2ZM1156 155h2v1h-2ZM1160 144h2v1h-2ZM1165 141h1V165h-1ZM1163 144h2v1h-2ZM1166 159h2v1h-2ZM1172 155h1V167h-1ZM1170 159h2v1h-2ZM1173 163h2v1h-2ZM1178 135h2V165h-2ZM1176 163h2v1h-2ZM1180 156h2v1h-2ZM1185 140h1V160h-1ZM1183 156h2v1h-2ZM1186 143h2v1h-2ZM1192 139h1V158h-1ZM1190 143h2v1h-2ZM1193 143h2v1h-2ZM1198 150h2V163h-2ZM1196 150h2v1h-2ZM1200 156h2v1h-2ZM1205 156h2V217h-2ZM1203 156h2v1h-2ZM1207 216h2v1h-2ZM1212 195h1V232h-1ZM1210 216h2v1h-2ZM1213 200h2v1h-2ZM1219 198h1V213h-1ZM1217 200h2v1h-2ZM1220 206h2v1h-2ZM1225 187h2V215h-2ZM1223 206h2v1h-2ZM1227 203h2v1h-2ZM1232 198h1V210h-1ZM1230 203h2v1h-2ZM1233 204h2v1h-2ZM1239 189h1V226h-1ZM1237 204h2v1h-2ZM1240 219h2v1h-2ZM1245 212h2V229h-2ZM1243 219h2v1h-2ZM1247 225h2v1h-2ZM1252 219h2V247h-2ZM1250 225h2v1h-2ZM1254 238h2v1h-2ZM1259 237h1V257h-1ZM1257 238h2v1h-2ZM1260 244h2v1h-2ZM1265 222h2V256h-2ZM1263 244h2v1h-2ZM1267 241h2v1h-2ZM1272 224h2V246h-2ZM1270 241h2v1h-2ZM1274 229h2v1h-2ZM1279 219h1V232h-1ZM1277 229h2v1h-2ZM1280 221h2v1h-2ZM1286 219h1V223h-1ZM1284 221h2v1h-2ZM1287 221h2v1h-2Z" fill="#00ec00"/><path d="M574.8 206.5H548.5M548.5 270.5H574.8" stroke="#e8c800" stroke-width="1.5" fill="none"/><path d="M856.7 167.5H830.5M830.5 258.5H856.7" stroke="#e8c800" stroke-width="1.5" fill="none"/><path d="M1293.5 64H1301.5L1297.5 69Z" fill="#9aa4b0"/></svg><div class="b" style="left:1572px;top:65px;width:3px;height:1px;background:#c8c8c8"></div><div class="t" style="left:1576.00px;top:60.88px;font-size:9px;color:#fff;">113.8</div><div class="b" style="left:1572px;top:93px;width:3px;height:1px;background:#c8c8c8"></div><div class="t" style="left:1576.00px;top:88.88px;font-size:9px;color:#fff;">113.6</div><div class="b" style="left:1572px;top:120px;width:3px;height:1px;background:#c8c8c8"></div><div class="t" style="left:1576.00px;top:115.88px;font-size:9px;color:#fff;">113.4</div><div class="b" style="left:1572px;top:148px;width:3px;height:1px;background:#c8c8c8"></div><div class="t" style="left:1576.00px;top:143.88px;font-size:9px;color:#fff;">113.2</div><div class="b" style="left:1572px;top:176px;width:3px;height:1px;background:#c8c8c8"></div><div class="t" style="left:1576.00px;top:171.88px;font-size:9px;color:#fff;">113.0</div><div class="b" style="left:1572px;top:203px;width:3px;height:1px;background:#c8c8c8"></div><div class="t" style="left:1576.00px;top:198.88px;font-size:9px;color:#fff;">112.8</div><div class="b" style="left:1572px;top:231px;width:3px;height:1px;background:#c8c8c8"></div><div class="t" style="left:1576.00px;top:226.88px;font-size:9px;color:#fff;">112.6</div><div class="b" style="left:1572px;top:259px;width:3px;height:1px;background:#c8c8c8"></div><div class="t" style="left:1576.00px;top:254.88px;font-size:9px;color:#fff;">112.4</div><div class="b" style="left:1572px;top:286px;width:3px;height:1px;background:#c8c8c8"></div><div class="t" style="left:1576.00px;top:281.88px;font-size:9px;color:#fff;">112.2</div><div class="b" style="left:1572px;top:314px;width:3px;height:1px;background:#c8c8c8"></div><div class="t" style="left:1576.00px;top:309.88px;font-size:9px;color:#fff;">112.0</div><div class="b" style="left:1572px;top:342px;width:3px;height:1px;background:#c8c8c8"></div><div class="t" style="left:1576.00px;top:337.88px;font-size:9px;color:#fff;">111.8</div><div class="b" style="left:1572px;top:369px;width:3px;height:1px;background:#c8c8c8"></div><div class="t" style="left:1576.00px;top:364.88px;font-size:9px;color:#fff;">111.6</div><div class="b" style="left:1572px;top:397px;width:3px;height:1px;background:#c8c8c8"></div><div class="t" style="left:1576.00px;top:392.88px;font-size:9px;color:#fff;">111.4</div><div class="b" style="left:1572px;top:425px;width:3px;height:1px;background:#c8c8c8"></div><div class="t" style="left:1576.00px;top:420.88px;font-size:9px;color:#fff;">111.1</div><div class="b" style="left:1572px;top:452px;width:3px;height:1px;background:#c8c8c8"></div><div class="t" style="left:1576.00px;top:447.88px;font-size:9px;color:#fff;">110.9</div><div class="b" style="left:1572px;top:480px;width:3px;height:1px;background:#c8c8c8"></div><div class="t" style="left:1576.00px;top:475.88px;font-size:9px;color:#fff;">110.7</div><div class="b" style="left:1573px;top:216px;width:22px;height:11px;background:#fff"></div><div class="t" style="left:1576.00px;top:216.88px;font-size:9px;color:#000;">112.7</div><div class="b" style="left:206px;top:483px;width:1px;height:3px;background:#c8c8c8"></div><div class="t" style="left:206.00px;top:486.30px;font-size:8.5px;color:#fff;transform:scaleX(0.9350);transform-origin:0 0;">22 Nov 2017</div><div class="b" style="left:260px;top:483px;width:1px;height:3px;background:#c8c8c8"></div><div class="t" style="left:260.00px;top:486.30px;font-size:8.5px;color:#fff;transform:scaleX(0.9350);transform-origin:0 0;">23 Nov 16:00</div><div class="b" style="left:313px;top:483px;width:1px;height:3px;background:#c8c8c8"></div><div class="t" style="left:313.00px;top:486.30px;font-size:8.5px;color:#fff;transform:scaleX(0.9350);transform-origin:0 0;">27 Nov 00:00</div><div class="b" style="left:367px;top:483px;width:1px;height:3px;background:#c8c8c8"></div><div class="t" style="left:367.00px;top:486.30px;font-size:8.5px;color:#fff;transform:scaleX(0.9350);transform-origin:0 0;">28 Nov 08:00</div><div class="b" style="left:421px;top:483px;width:1px;height:3px;background:#c8c8c8"></div><div class="t" style="left:421.00px;top:486.30px;font-size:8.5px;color:#fff;transform:scaleX(0.9350);transform-origin:0 0;">29 Nov 16:00</div><div class="b" style="left:474px;top:483px;width:1px;height:3px;background:#c8c8c8"></div><div class="t" style="left:474.00px;top:486.30px;font-size:8.5px;color:#fff;transform:scaleX(0.9350);transform-origin:0 0;">1 Dec 00:00</div><div class="b" style="left:528px;top:483px;width:1px;height:3px;background:#c8c8c8"></div><div class="t" style="left:528.00px;top:486.30px;font-size:8.5px;color:#fff;transform:scaleX(0.9350);transform-origin:0 0;">4 Dec 08:00</div><div class="b" style="left:581px;top:483px;width:1px;height:3px;background:#c8c8c8"></div><div class="t" style="left:581.00px;top:486.30px;font-size:8.5px;color:#fff;transform:scaleX(0.9350);transform-origin:0 0;">5 Dec 16:00</div><div class="b" style="left:635px;top:483px;width:1px;height:3px;background:#c8c8c8"></div><div class="t" style="left:635.00px;top:486.30px;font-size:8.5px;color:#fff;transform:scaleX(0.9350);transform-origin:0 0;">7 Dec 00:00</div><div class="b" style="left:689px;top:483px;width:1px;height:3px;background:#c8c8c8"></div><div class="t" style="left:689.00px;top:486.30px;font-size:8.5px;color:#fff;transform:scaleX(0.9350);transform-origin:0 0;">8 Dec 08:00</div><div class="b" style="left:742px;top:483px;width:1px;height:3px;background:#c8c8c8"></div><div class="t" style="left:742.00px;top:486.30px;font-size:8.5px;color:#fff;transform:scaleX(0.9350);transform-origin:0 0;">11 Dec 16:00</div><div class="b" style="left:796px;top:483px;width:1px;height:3px;background:#c8c8c8"></div><div class="t" style="left:796.00px;top:486.30px;font-size:8.5px;color:#fff;transform:scaleX(0.9350);transform-origin:0 0;">13 Dec 00:00</div><div class="b" style="left:850px;top:483px;width:1px;height:3px;background:#c8c8c8"></div><div class="t" style="left:850.00px;top:486.30px;font-size:8.5px;color:#fff;transform:scaleX(0.9350);transform-origin:0 0;">14 Dec 08:00</div><div class="b" style="left:903px;top:483px;width:1px;height:3px;background:#c8c8c8"></div><div class="t" style="left:903.00px;top:486.30px;font-size:8.5px;color:#fff;transform:scaleX(0.9350);transform-origin:0 0;">15 Dec 16:00</div><div class="b" style="left:957px;top:483px;width:1px;height:3px;background:#c8c8c8"></div><div class="t" style="left:957.00px;top:486.30px;font-size:8.5px;color:#fff;transform:scaleX(0.9350);transform-origin:0 0;">19 Dec 00:00</div><div class="b" style="left:1011px;top:483px;width:1px;height:3px;background:#c8c8c8"></div><div class="t" style="left:1011.00px;top:486.30px;font-size:8.5px;color:#fff;transform:scaleX(0.9350);transform-origin:0 0;">20 Dec 08:00</div><div class="b" style="left:1064px;top:483px;width:1px;height:3px;background:#c8c8c8"></div><div class="t" style="left:1064.00px;top:486.30px;font-size:8.5px;color:#fff;transform:scaleX(0.9350);transform-origin:0 0;">21 Dec 16:00</div><div class="b" style="left:1118px;top:483px;width:1px;height:3px;background:#c8c8c8"></div><div class="t" style="left:1118.00px;top:486.30px;font-size:8.5px;color:#fff;transform:scaleX(0.9350);transform-origin:0 0;">26 Dec 00:00</div><div class="b" style="left:1172px;top:483px;width:1px;height:3px;background:#c8c8c8"></div><div class="t" style="left:1172.00px;top:486.30px;font-size:8.5px;color:#fff;transform:scaleX(0.9350);transform-origin:0 0;">27 Dec 08:00</div><div class="b" style="left:1225px;top:483px;width:1px;height:3px;background:#c8c8c8"></div><div class="t" style="left:1225.00px;top:486.30px;font-size:8.5px;color:#fff;transform:scaleX(0.9350);transform-origin:0 0;">28 Dec 16:00</div><div class="b" style="left:1279px;top:483px;width:1px;height:3px;background:#c8c8c8"></div><div class="t" style="left:1279.00px;top:486.30px;font-size:8.5px;color:#fff;transform:scaleX(0.9350);transform-origin:0 0;">2 Jan 00:00</div><div class="t" style="left:210px;top:66px;font-size:8px;color:#fff;">USDJPY,H4  112.715 112.745 112.715 112.727</div><div class="t" style="left:210px;top:88.5px;font-size:8px;color:#fff;">Mastercandle EA</div><div class="b" style="left:210px;top:105px;width:92px;height:1px;background:#c0c0c0"></div><div class="t" style="left:210px;top:118.5px;font-size:7.5px;color:#fff;">Account Number - - - - - - - : 78136189</div><div class="t" style="left:210px;top:128.6px;font-size:7.5px;color:#fff;">Balance - - - - - - - - - - - - - : 10000</div><div class="t" style="left:210px;top:138.7px;font-size:7.5px;color:#fff;">Total Current Profit - - - - : 0.00</div><div class="t" style="left:210px;top:148.8px;font-size:7.5px;color:#fff;">Total Current Profit Buy - : 0.00</div><div class="t" style="left:210px;top:158.9px;font-size:7.5px;color:#fff;">Total Current Profit Sell - : 0.00</div><div class="t" style="left:210px;top:169.0px;font-size:7.5px;color:#fff;">Spread - - - - - - - - - - - - - : 1.5</div><div class="b" style="left:210px;top:185px;width:92px;height:1px;background:#e0e0e0"></div></body></html>
